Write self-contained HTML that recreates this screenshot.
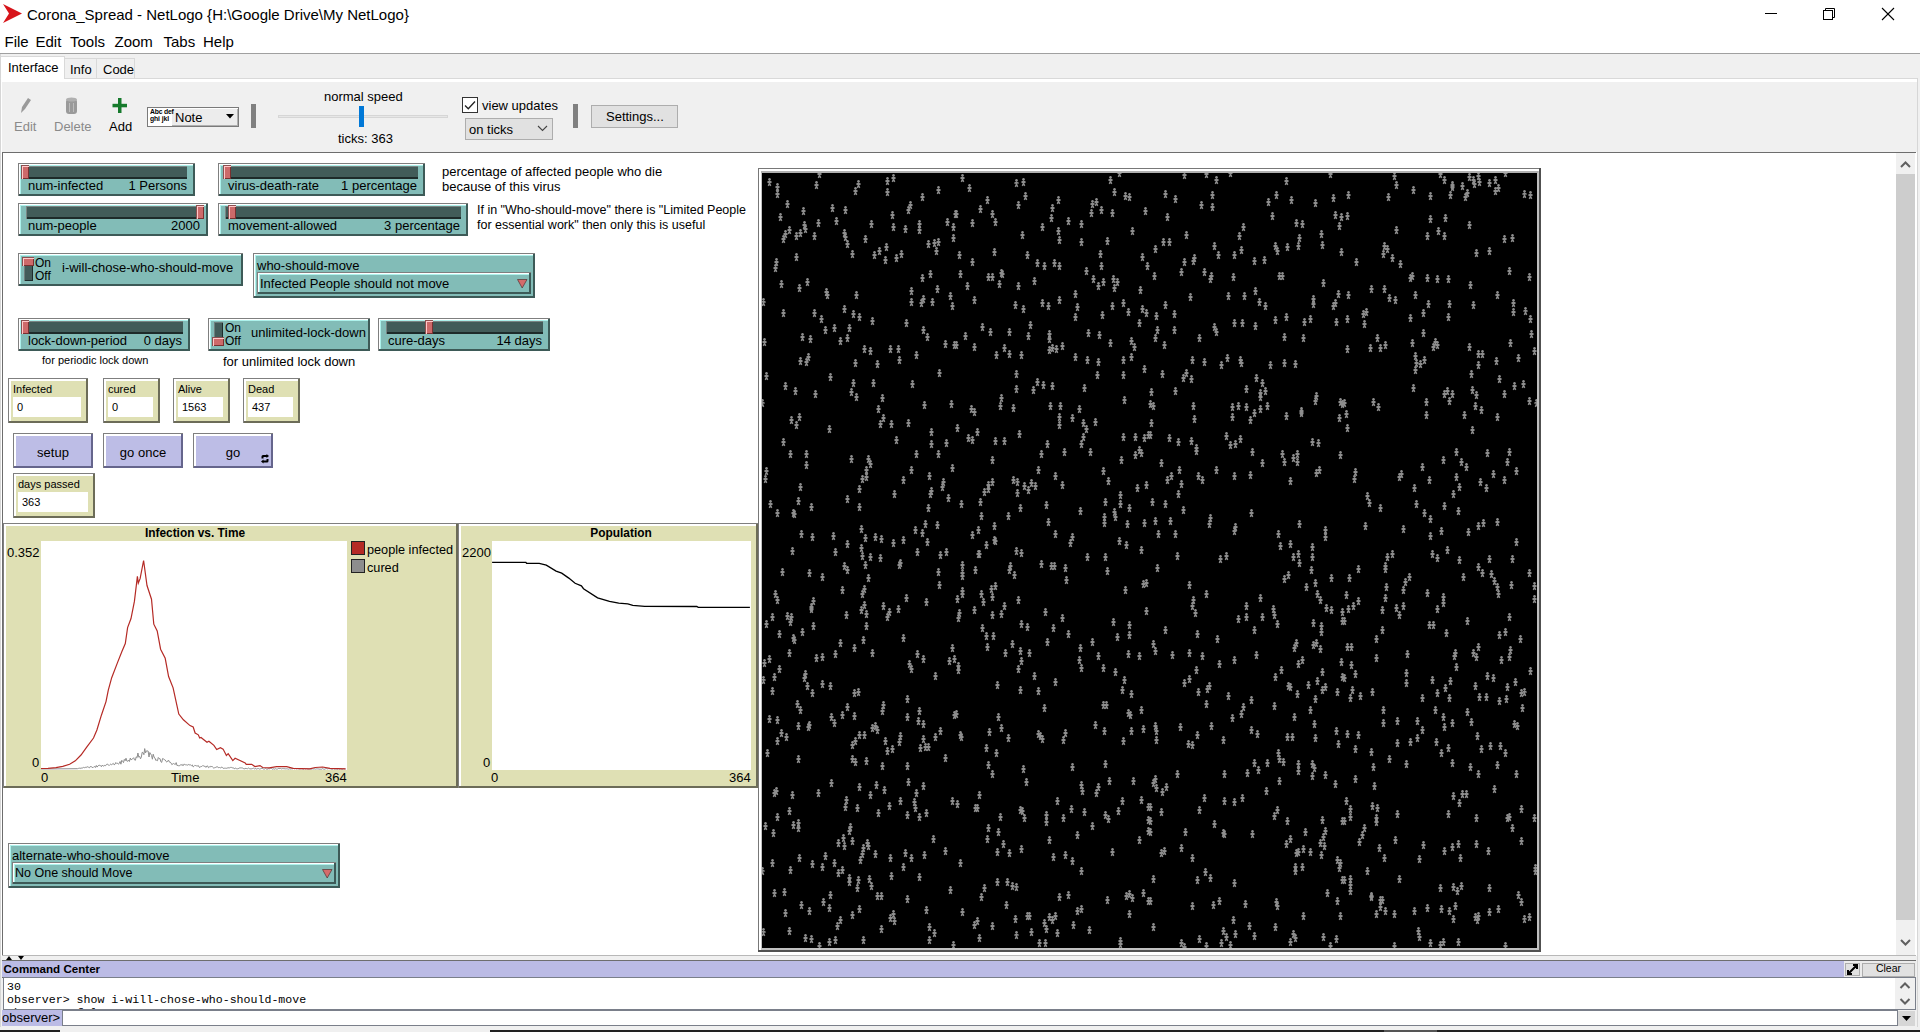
<!DOCTYPE html><html><head><meta charset="utf-8"><title>NetLogo</title><style>
*{margin:0;padding:0}
html,body{width:1920px;height:1032px;overflow:hidden;background:#fff;position:relative;font-family:'Liberation Sans',sans-serif}
.t{position:absolute;white-space:pre;line-height:1;}
</style></head><body><svg style="position:absolute;left:0;top:0" width="30" height="28"><polygon points="3,4 22,13.5 3,23 9,13.5" fill="#d7141a"/></svg><div class="t" style="left:27px;top:7.3px;font-size:15px;color:#000;font-weight:400;font-family:'Liberation Sans',sans-serif;">Corona_Spread - NetLogo {H:\Google Drive\My NetLogo}</div><svg style="position:absolute;left:1750px;top:0" width="170" height="30"><line x1="15" y1="13.5" x2="27" y2="13.5" stroke="#000" stroke-width="1"/><rect x="73.5" y="10.5" width="9" height="9" fill="none" stroke="#000" stroke-width="1"/><path d="M75.5 10.5 V8.5 H84.5 V17.5 H82.5" fill="none" stroke="#000" stroke-width="1"/><line x1="132" y1="8" x2="144" y2="20" stroke="#000" stroke-width="1.1"/><line x1="144" y1="8" x2="132" y2="20" stroke="#000" stroke-width="1.1"/></svg><div class="t" style="left:4.5px;top:34.3px;font-size:15px;color:#000;font-weight:400;font-family:'Liberation Sans',sans-serif;">File</div><div class="t" style="left:35.5px;top:34.3px;font-size:15px;color:#000;font-weight:400;font-family:'Liberation Sans',sans-serif;">Edit</div><div class="t" style="left:70px;top:34.3px;font-size:15px;color:#000;font-weight:400;font-family:'Liberation Sans',sans-serif;">Tools</div><div class="t" style="left:114.5px;top:34.3px;font-size:15px;color:#000;font-weight:400;font-family:'Liberation Sans',sans-serif;">Zoom</div><div class="t" style="left:163.5px;top:34.3px;font-size:15px;color:#000;font-weight:400;font-family:'Liberation Sans',sans-serif;">Tabs</div><div class="t" style="left:203px;top:34.3px;font-size:15px;color:#000;font-weight:400;font-family:'Liberation Sans',sans-serif;">Help</div><div style="position:absolute;left:0px;top:53px;width:1920px;height:1px;box-sizing:border-box;background:#a0a0a0"></div><div style="position:absolute;left:0px;top:54px;width:1920px;height:24px;box-sizing:border-box;background:#f0f0f0"></div><div style="position:absolute;left:0px;top:78px;width:1920px;height:954px;box-sizing:border-box;background:#fff"></div><div style="position:absolute;left:0px;top:54px;width:1px;height:978px;box-sizing:border-box;background:#d6d6d6"></div><div style="position:absolute;left:1px;top:56px;width:64px;height:23px;box-sizing:border-box;background:#fff;border:1px solid #d9d9d9;border-bottom:none"></div><div style="position:absolute;left:64px;top:58px;width:33px;height:21px;box-sizing:border-box;background:#f0f0f0;border:1px solid #d9d9d9"></div><div style="position:absolute;left:96px;top:58px;width:39px;height:21px;box-sizing:border-box;background:#f0f0f0;border:1px solid #d9d9d9"></div><div style="position:absolute;left:0px;top:78px;width:1920px;height:1px;box-sizing:border-box;background:#d9d9d9"></div><div style="position:absolute;left:1px;top:57px;width:63px;height:23px;box-sizing:border-box;background:#fff"></div><div class="t" style="left:8px;top:61.0px;font-size:13px;color:#000;font-weight:400;font-family:'Liberation Sans',sans-serif;">Interface</div><div class="t" style="left:70px;top:63.0px;font-size:13px;color:#000;font-weight:400;font-family:'Liberation Sans',sans-serif;">Info</div><div class="t" style="left:103px;top:63.0px;font-size:13px;color:#000;font-weight:400;font-family:'Liberation Sans',sans-serif;">Code</div><div style="position:absolute;left:2px;top:82px;width:1916px;height:70px;box-sizing:border-box;background:#f0f0f0"></div><div style="position:absolute;left:1917px;top:54px;width:3px;height:978px;box-sizing:border-box;background:#f0f0f0"></div><svg style="position:absolute;left:18px;top:96px" width="16" height="20"><path d="M3 17 L4 11 L10 2 L13 4 L7 13 Z" fill="#9a9a9a"/></svg><div class="t" style="left:14px;top:120.0px;font-size:13px;color:#8a8a8a;font-weight:400;font-family:'Liberation Sans',sans-serif;">Edit</div><svg style="position:absolute;left:64px;top:96px" width="16" height="20"><rect x="2" y="3" width="11" height="15" rx="3" fill="#9a9a9a"/><ellipse cx="7.5" cy="3.5" rx="5.5" ry="2" fill="#b0b0b0"/><line x1="5.5" y1="7" x2="5.5" y2="16" stroke="#bcbcbc"/><line x1="9.5" y1="7" x2="9.5" y2="16" stroke="#bcbcbc"/></svg><div class="t" style="left:54px;top:120.0px;font-size:13px;color:#8a8a8a;font-weight:400;font-family:'Liberation Sans',sans-serif;">Delete</div><svg style="position:absolute;left:112px;top:97px" width="16" height="18"><rect x="6" y="1" width="3.5" height="15" fill="#167a2c"/><rect x="0.5" y="6.8" width="14.5" height="3.5" fill="#167a2c"/></svg><div class="t" style="left:109px;top:120.0px;font-size:13px;color:#000;font-weight:400;font-family:'Liberation Sans',sans-serif;">Add</div><div style="position:absolute;left:147px;top:107px;width:92px;height:20px;box-sizing:border-box;background:#ececec;border:1px solid #7a7a7a;box-shadow:inset 1px 1px 0 #fff, inset -1px -1px 0 #b0b0b0"></div><div style="position:absolute;left:148px;top:108px;width:24px;height:18px;box-sizing:border-box;background:#fff"></div><div class="t" style="left:150px;top:108.7px;font-size:6.8px;color:#000;font-weight:700;font-family:'Liberation Sans',sans-serif;letter-spacing:-0.2px">Abc def</div><div class="t" style="left:150px;top:115.7px;font-size:6.8px;color:#000;font-weight:700;font-family:'Liberation Sans',sans-serif;letter-spacing:-0.1px">ghi jkl</div><div class="t" style="left:175px;top:111.0px;font-size:13px;color:#000;font-weight:400;font-family:'Liberation Sans',sans-serif;">Note</div><svg style="position:absolute;left:226px;top:114px" width="10" height="6"><polygon points="0,0 8,0 4,4.5" fill="#000"/></svg><div style="position:absolute;left:251px;top:104px;width:5px;height:24px;box-sizing:border-box;background:#808080"></div><div style="position:absolute;left:573px;top:104px;width:5px;height:24px;box-sizing:border-box;background:#808080"></div><div class="t" style="left:324px;top:90.0px;font-size:13px;color:#000;font-weight:400;font-family:'Liberation Sans',sans-serif;">normal speed</div><div style="position:absolute;left:278px;top:115px;width:170px;height:3px;box-sizing:border-box;background:#e7e7e7;border:1px solid #d6d6d6"></div><div style="position:absolute;left:359px;top:106px;width:5px;height:21px;box-sizing:border-box;background:#0078d7"></div><div class="t" style="left:338px;top:132.0px;font-size:13px;color:#000;font-weight:400;font-family:'Liberation Sans',sans-serif;">ticks: 363</div><div style="position:absolute;left:462px;top:97px;width:16px;height:16px;box-sizing:border-box;background:#fff;border:1px solid #333"></div><svg style="position:absolute;left:462px;top:97px" width="16" height="16"><path d="M3 8.5 L6.3 11.8 L13 4.5" fill="none" stroke="#222" stroke-width="1.3"/></svg><div class="t" style="left:482px;top:99.0px;font-size:13px;color:#000;font-weight:400;font-family:'Liberation Sans',sans-serif;">view updates</div><div style="position:absolute;left:465px;top:118px;width:88px;height:22px;box-sizing:border-box;background:#e1e1e1;border:1px solid #adadad"></div><div class="t" style="left:469px;top:123.0px;font-size:13px;color:#000;font-weight:400;font-family:'Liberation Sans',sans-serif;">on ticks</div><svg style="position:absolute;left:537px;top:125px" width="12" height="8"><path d="M1 1 L5.5 5.5 L10 1" fill="none" stroke="#444" stroke-width="1.1"/></svg><div style="position:absolute;left:591px;top:105px;width:87px;height:23px;box-sizing:border-box;background:#e1e1e1;border:1px solid #adadad"></div><div class="t" style="left:606px;top:110.0px;font-size:13px;color:#000;font-weight:400;font-family:'Liberation Sans',sans-serif;">Settings...</div><div style="position:absolute;left:2px;top:152px;width:1914px;height:1px;box-sizing:border-box;background:#6d6d6d"></div><div style="position:absolute;left:2px;top:152px;width:1px;height:804px;box-sizing:border-box;background:#6d6d6d"></div><div style="position:absolute;left:2px;top:955px;width:1914px;height:1px;box-sizing:border-box;background:#b8b8b8"></div><div style="position:absolute;left:1917px;top:78px;width:1px;height:950px;box-sizing:border-box;background:#d6d6d6"></div><div style="position:absolute;left:18px;top:163px;width:177px;height:33px;box-sizing:border-box;background:#82bcb7;border-top:1px solid #7f7f7f;border-left:1px solid #7f7f7f;box-shadow:inset -2px -2px 0 #3d5a57, inset 1px 1px 0 #fff, inset 2px 2px 0 #aef2ec"></div><div style="position:absolute;left:21px;top:166px;width:166px;height:13px;box-sizing:border-box;background:#425c59;border-top:1px solid #7a8583;border-left:1px solid #7a8583;box-shadow:inset 0 -2px 0 #1e2b2a"></div><div style="position:absolute;left:21px;top:165px;width:8px;height:14px;box-sizing:border-box;background:#cd6a6a;border-top:1px solid #8a5050;border-left:1px solid #8a5050;box-shadow:inset 1px 1px 0 #ffc8c8, inset -1px -1px 0 #7a3030"></div><div class="t" style="left:28px;top:179.0px;font-size:13px;color:#000;font-weight:400;font-family:'Liberation Sans',sans-serif;">num-infected</div><div class="t" style="left:18px;width:169px;top:179.0px;font-size:13px;text-align:right">1 Persons</div><div style="position:absolute;left:218px;top:163px;width:207px;height:33px;box-sizing:border-box;background:#82bcb7;border-top:1px solid #7f7f7f;border-left:1px solid #7f7f7f;box-shadow:inset -2px -2px 0 #3d5a57, inset 1px 1px 0 #fff, inset 2px 2px 0 #aef2ec"></div><div style="position:absolute;left:223px;top:166px;width:195px;height:13px;box-sizing:border-box;background:#425c59;border-top:1px solid #7a8583;border-left:1px solid #7a8583;box-shadow:inset 0 -2px 0 #1e2b2a"></div><div style="position:absolute;left:223px;top:165px;width:8px;height:14px;box-sizing:border-box;background:#cd6a6a;border-top:1px solid #8a5050;border-left:1px solid #8a5050;box-shadow:inset 1px 1px 0 #ffc8c8, inset -1px -1px 0 #7a3030"></div><div class="t" style="left:228px;top:179.0px;font-size:13px;color:#000;font-weight:400;font-family:'Liberation Sans',sans-serif;">virus-death-rate</div><div class="t" style="left:218px;width:199px;top:179.0px;font-size:13px;text-align:right">1 percentage</div><div style="position:absolute;left:18px;top:203px;width:190px;height:33px;box-sizing:border-box;background:#82bcb7;border-top:1px solid #7f7f7f;border-left:1px solid #7f7f7f;box-shadow:inset -2px -2px 0 #3d5a57, inset 1px 1px 0 #fff, inset 2px 2px 0 #aef2ec"></div><div style="position:absolute;left:26px;top:206px;width:178px;height:13px;box-sizing:border-box;background:#425c59;border-top:1px solid #7a8583;border-left:1px solid #7a8583;box-shadow:inset 0 -2px 0 #1e2b2a"></div><div style="position:absolute;left:196px;top:205px;width:8px;height:14px;box-sizing:border-box;background:#cd6a6a;border-top:1px solid #8a5050;border-left:1px solid #8a5050;box-shadow:inset 1px 1px 0 #ffc8c8, inset -1px -1px 0 #7a3030"></div><div class="t" style="left:28px;top:219.0px;font-size:13px;color:#000;font-weight:400;font-family:'Liberation Sans',sans-serif;">num-people</div><div class="t" style="left:18px;width:182px;top:219.0px;font-size:13px;text-align:right">2000</div><div style="position:absolute;left:218px;top:203px;width:250px;height:33px;box-sizing:border-box;background:#82bcb7;border-top:1px solid #7f7f7f;border-left:1px solid #7f7f7f;box-shadow:inset -2px -2px 0 #3d5a57, inset 1px 1px 0 #fff, inset 2px 2px 0 #aef2ec"></div><div style="position:absolute;left:225px;top:206px;width:236px;height:13px;box-sizing:border-box;background:#425c59;border-top:1px solid #7a8583;border-left:1px solid #7a8583;box-shadow:inset 0 -2px 0 #1e2b2a"></div><div style="position:absolute;left:228px;top:205px;width:8px;height:14px;box-sizing:border-box;background:#cd6a6a;border-top:1px solid #8a5050;border-left:1px solid #8a5050;box-shadow:inset 1px 1px 0 #ffc8c8, inset -1px -1px 0 #7a3030"></div><div class="t" style="left:228px;top:219.0px;font-size:13px;color:#000;font-weight:400;font-family:'Liberation Sans',sans-serif;">movement-allowed</div><div class="t" style="left:218px;width:242px;top:219.0px;font-size:13px;text-align:right">3 percentage</div><div class="t" style="left:442px;top:165.0px;font-size:13px;color:#000;font-weight:400;font-family:'Liberation Sans',sans-serif;">percentage of affected people who die</div><div class="t" style="left:442px;top:180.0px;font-size:13px;color:#000;font-weight:400;font-family:'Liberation Sans',sans-serif;">because of this virus</div><div class="t" style="left:477px;top:204.4px;font-size:12.5px;color:#000;font-weight:400;font-family:'Liberation Sans',sans-serif;">If in "Who-should-move" there is "Limited People</div><div class="t" style="left:477px;top:219.4px;font-size:12.5px;color:#000;font-weight:400;font-family:'Liberation Sans',sans-serif;">for essential work" then only this is useful</div><div style="position:absolute;left:18px;top:253px;width:225px;height:33px;box-sizing:border-box;background:#82bcb7;border-top:1px solid #7f7f7f;border-left:1px solid #7f7f7f;box-shadow:inset -2px -2px 0 #3d5a57, inset 1px 1px 0 #fff, inset 2px 2px 0 #aef2ec"></div><div style="position:absolute;left:24px;top:257px;width:9px;height:24px;box-sizing:border-box;background:#425c59;border-top:1px solid #6f7f7d;border-left:1px solid #6f7f7d;box-shadow:inset -1px -1px 0 #1e2b2a"></div><div style="position:absolute;left:22px;top:257px;width:12px;height:9px;box-sizing:border-box;background:#cd6a6a;border-top:1px solid #8a5050;border-left:1px solid #8a5050;box-shadow:inset 1px 1px 0 #ffc8c8, inset -1px -1px 0 #7a3030"></div><div class="t" style="left:35px;top:256.8px;font-size:12px;color:#000;font-weight:400;font-family:'Liberation Sans',sans-serif;">On</div><div class="t" style="left:35px;top:269.6px;font-size:12px;color:#000;font-weight:400;font-family:'Liberation Sans',sans-serif;">Off</div><div class="t" style="left:62px;top:261.0px;font-size:13px;color:#000;font-weight:400;font-family:'Liberation Sans',sans-serif;">i-will-chose-who-should-move</div><div style="position:absolute;left:253px;top:253px;width:282px;height:45px;box-sizing:border-box;background:#82bcb7;border-top:1px solid #7f7f7f;border-left:1px solid #7f7f7f;box-shadow:inset -2px -2px 0 #3d5a57, inset 1px 1px 0 #fff, inset 2px 2px 0 #aef2ec"></div><div class="t" style="left:257px;top:259.0px;font-size:13px;color:#000;font-weight:400;font-family:'Liberation Sans',sans-serif;">who-should-move</div><div style="position:absolute;left:257px;top:272px;width:274px;height:22px;box-sizing:border-box;background:#82bcb7;border-top:1px solid #7f7f7f;border-left:1px solid #7f7f7f;box-shadow:inset -2px -2px 0 #3d5a57, inset 1px 1px 0 #fff, inset 2px 2px 0 #aef2ec"></div><div class="t" style="left:260px;top:277.0px;font-size:13px;color:#000;font-weight:400;font-family:'Liberation Sans',sans-serif;">Infected People should not move</div><svg style="position:absolute;left:517px;top:279px" width="11" height="10"><polygon points="0.5,0.5 10,0.5 5.2,9" fill="#d46b6b" stroke="#503030" stroke-width="0.7"/></svg><div style="position:absolute;left:18px;top:318px;width:172px;height:33px;box-sizing:border-box;background:#82bcb7;border-top:1px solid #7f7f7f;border-left:1px solid #7f7f7f;box-shadow:inset -2px -2px 0 #3d5a57, inset 1px 1px 0 #fff, inset 2px 2px 0 #aef2ec"></div><div style="position:absolute;left:21px;top:321px;width:162px;height:13px;box-sizing:border-box;background:#425c59;border-top:1px solid #7a8583;border-left:1px solid #7a8583;box-shadow:inset 0 -2px 0 #1e2b2a"></div><div style="position:absolute;left:21px;top:320px;width:8px;height:14px;box-sizing:border-box;background:#cd6a6a;border-top:1px solid #8a5050;border-left:1px solid #8a5050;box-shadow:inset 1px 1px 0 #ffc8c8, inset -1px -1px 0 #7a3030"></div><div class="t" style="left:28px;top:334.0px;font-size:13px;color:#000;font-weight:400;font-family:'Liberation Sans',sans-serif;">lock-down-period</div><div class="t" style="left:18px;width:164px;top:334.0px;font-size:13px;text-align:right">0 days</div><div style="position:absolute;left:208px;top:318px;width:162px;height:33px;box-sizing:border-box;background:#82bcb7;border-top:1px solid #7f7f7f;border-left:1px solid #7f7f7f;box-shadow:inset -2px -2px 0 #3d5a57, inset 1px 1px 0 #fff, inset 2px 2px 0 #aef2ec"></div><div style="position:absolute;left:214px;top:322px;width:9px;height:24px;box-sizing:border-box;background:#425c59;border-top:1px solid #6f7f7d;border-left:1px solid #6f7f7d;box-shadow:inset -1px -1px 0 #1e2b2a"></div><div style="position:absolute;left:212px;top:337px;width:12px;height:9px;box-sizing:border-box;background:#cd6a6a;border-top:1px solid #8a5050;border-left:1px solid #8a5050;box-shadow:inset 1px 1px 0 #ffc8c8, inset -1px -1px 0 #7a3030"></div><div class="t" style="left:225px;top:321.8px;font-size:12px;color:#000;font-weight:400;font-family:'Liberation Sans',sans-serif;">On</div><div class="t" style="left:225px;top:334.6px;font-size:12px;color:#000;font-weight:400;font-family:'Liberation Sans',sans-serif;">Off</div><div class="t" style="left:251px;top:326.0px;font-size:13px;color:#000;font-weight:400;font-family:'Liberation Sans',sans-serif;">unlimited-lock-down</div><div style="position:absolute;left:378px;top:318px;width:172px;height:33px;box-sizing:border-box;background:#82bcb7;border-top:1px solid #7f7f7f;border-left:1px solid #7f7f7f;box-shadow:inset -2px -2px 0 #3d5a57, inset 1px 1px 0 #fff, inset 2px 2px 0 #aef2ec"></div><div style="position:absolute;left:386px;top:321px;width:157px;height:13px;box-sizing:border-box;background:#425c59;border-top:1px solid #7a8583;border-left:1px solid #7a8583;box-shadow:inset 0 -2px 0 #1e2b2a"></div><div style="position:absolute;left:425px;top:320px;width:8px;height:14px;box-sizing:border-box;background:#cd6a6a;border-top:1px solid #8a5050;border-left:1px solid #8a5050;box-shadow:inset 1px 1px 0 #ffc8c8, inset -1px -1px 0 #7a3030"></div><div class="t" style="left:388px;top:334.0px;font-size:13px;color:#000;font-weight:400;font-family:'Liberation Sans',sans-serif;">cure-days</div><div class="t" style="left:378px;width:164px;top:334.0px;font-size:13px;text-align:right">14 days</div><div class="t" style="left:42px;top:354.7px;font-size:11px;color:#000;font-weight:400;font-family:'Liberation Sans',sans-serif;">for periodic lock down</div><div class="t" style="left:223px;top:355.0px;font-size:13px;color:#000;font-weight:400;font-family:'Liberation Sans',sans-serif;">for unlimited lock down</div><div style="position:absolute;left:8px;top:378px;width:80px;height:45px;box-sizing:border-box;background:#dfe0b4;border-top:1px solid #7f7f7f;border-left:1px solid #7f7f7f;box-shadow:inset -2px -2px 0 #6c6c58, inset 2px 2px 0 #fff"></div><div class="t" style="left:13px;top:383.7px;font-size:11px;color:#000;font-weight:400;font-family:'Liberation Sans',sans-serif;">Infected</div><div style="position:absolute;left:13px;top:397px;width:68px;height:20px;box-sizing:border-box;background:#fff"></div><div class="t" style="left:17px;top:401.9px;font-size:11px;color:#000;font-weight:400;font-family:'Liberation Sans',sans-serif;">0</div><div style="position:absolute;left:103px;top:378px;width:57px;height:45px;box-sizing:border-box;background:#dfe0b4;border-top:1px solid #7f7f7f;border-left:1px solid #7f7f7f;box-shadow:inset -2px -2px 0 #6c6c58, inset 2px 2px 0 #fff"></div><div class="t" style="left:108px;top:383.7px;font-size:11px;color:#000;font-weight:400;font-family:'Liberation Sans',sans-serif;">cured</div><div style="position:absolute;left:108px;top:397px;width:45px;height:20px;box-sizing:border-box;background:#fff"></div><div class="t" style="left:112px;top:401.9px;font-size:11px;color:#000;font-weight:400;font-family:'Liberation Sans',sans-serif;">0</div><div style="position:absolute;left:173px;top:378px;width:57px;height:45px;box-sizing:border-box;background:#dfe0b4;border-top:1px solid #7f7f7f;border-left:1px solid #7f7f7f;box-shadow:inset -2px -2px 0 #6c6c58, inset 2px 2px 0 #fff"></div><div class="t" style="left:178px;top:383.7px;font-size:11px;color:#000;font-weight:400;font-family:'Liberation Sans',sans-serif;">Alive</div><div style="position:absolute;left:178px;top:397px;width:45px;height:20px;box-sizing:border-box;background:#fff"></div><div class="t" style="left:182px;top:401.9px;font-size:11px;color:#000;font-weight:400;font-family:'Liberation Sans',sans-serif;">1563</div><div style="position:absolute;left:243px;top:378px;width:57px;height:45px;box-sizing:border-box;background:#dfe0b4;border-top:1px solid #7f7f7f;border-left:1px solid #7f7f7f;box-shadow:inset -2px -2px 0 #6c6c58, inset 2px 2px 0 #fff"></div><div class="t" style="left:248px;top:383.7px;font-size:11px;color:#000;font-weight:400;font-family:'Liberation Sans',sans-serif;">Dead</div><div style="position:absolute;left:248px;top:397px;width:45px;height:20px;box-sizing:border-box;background:#fff"></div><div class="t" style="left:252px;top:401.9px;font-size:11px;color:#000;font-weight:400;font-family:'Liberation Sans',sans-serif;">437</div><div style="position:absolute;left:13px;top:433px;width:80px;height:35px;box-sizing:border-box;background:#bdbde6;border-top:1px solid #7f7f7f;border-left:1px solid #7f7f7f;box-shadow:inset -2px -2px 0 #65658c, inset 2px 2px 0 #fff"></div><div class="t" style="left:13px;width:80px;top:446.0px;font-size:13px;text-align:center">setup</div><div style="position:absolute;left:103px;top:433px;width:80px;height:35px;box-sizing:border-box;background:#bdbde6;border-top:1px solid #7f7f7f;border-left:1px solid #7f7f7f;box-shadow:inset -2px -2px 0 #65658c, inset 2px 2px 0 #fff"></div><div class="t" style="left:103px;width:80px;top:446.0px;font-size:13px;text-align:center">go once</div><div style="position:absolute;left:193px;top:433px;width:80px;height:35px;box-sizing:border-box;background:#bdbde6;border-top:1px solid #7f7f7f;border-left:1px solid #7f7f7f;box-shadow:inset -2px -2px 0 #65658c, inset 2px 2px 0 #fff"></div><div class="t" style="left:193px;width:80px;top:446.0px;font-size:13px;text-align:center">go</div><svg style="position:absolute;left:260px;top:454px" width="10" height="10"><path d="M1.5 4.5 V2.5 Q1.5 1 3 1 H6.5 V0 L9 2 L6.5 4 V3 H3.5 V4.5 Z M8.5 5 V7 Q8.5 8.5 7 8.5 H3.5 V9.5 L1 7.5 L3.5 5.5 V6.5 H6.5 V5 Z" fill="#000"/></svg><div style="position:absolute;left:13px;top:473px;width:82px;height:45px;box-sizing:border-box;background:#dfe0b4;border-top:1px solid #7f7f7f;border-left:1px solid #7f7f7f;box-shadow:inset -2px -2px 0 #6c6c58, inset 2px 2px 0 #fff"></div><div class="t" style="left:18px;top:478.7px;font-size:11px;color:#000;font-weight:400;font-family:'Liberation Sans',sans-serif;">days passed</div><div style="position:absolute;left:18px;top:492px;width:70px;height:20px;box-sizing:border-box;background:#fff"></div><div class="t" style="left:22px;top:496.9px;font-size:11px;color:#000;font-weight:400;font-family:'Liberation Sans',sans-serif;">363</div><div style="position:absolute;left:8px;top:843px;width:332px;height:45px;box-sizing:border-box;background:#82bcb7;border-top:1px solid #7f7f7f;border-left:1px solid #7f7f7f;box-shadow:inset -2px -2px 0 #3d5a57, inset 1px 1px 0 #fff, inset 2px 2px 0 #aef2ec"></div><div class="t" style="left:12px;top:849.0px;font-size:13px;color:#000;font-weight:400;font-family:'Liberation Sans',sans-serif;">alternate-who-should-move</div><div style="position:absolute;left:12px;top:862px;width:324px;height:22px;box-sizing:border-box;background:#82bcb7;border-top:1px solid #7f7f7f;border-left:1px solid #7f7f7f;box-shadow:inset -2px -2px 0 #3d5a57, inset 1px 1px 0 #fff, inset 2px 2px 0 #aef2ec"></div><div class="t" style="left:15px;top:867.4px;font-size:12.5px;color:#000;font-weight:400;font-family:'Liberation Sans',sans-serif;">No One should Move</div><svg style="position:absolute;left:322px;top:869px" width="11" height="10"><polygon points="0.5,0.5 10,0.5 5.2,9" fill="#d46b6b" stroke="#503030" stroke-width="0.7"/></svg><div style="position:absolute;left:3px;top:523px;width:455px;height:265px;box-sizing:border-box;background:#dfe0b4;border-top:1px solid #7f7f7f;border-left:1px solid #7f7f7f;box-shadow:inset -2px -2px 0 #6c6c58, inset 2px 2px 0 #fff"></div><div class="t" style="left:95px;width:200px;top:528.1px;font-size:11.9px;font-weight:700;text-align:center">Infection vs. Time</div><div style="position:absolute;left:41px;top:541px;width:306px;height:229px;box-sizing:border-box;background:#fff"></div><div style="position:absolute;left:458px;top:523px;width:300px;height:265px;box-sizing:border-box;background:#dfe0b4;border-top:1px solid #7f7f7f;border-left:1px solid #7f7f7f;box-shadow:inset -2px -2px 0 #6c6c58, inset 2px 2px 0 #fff"></div><div class="t" style="left:521px;width:200px;top:528.1px;font-size:11.9px;font-weight:700;text-align:center">Population</div><div style="position:absolute;left:492px;top:541px;width:259px;height:229px;box-sizing:border-box;background:#fff"></div><svg style="position:absolute;left:0;top:0" width="760" height="790"><polyline points="41.0,769.0 77.6,768.7 78.4,768.4 79.3,768.1 80.1,768.6 81.0,767.8 81.8,768.2 82.7,767.9 83.5,767.4 84.4,767.9 85.2,767.1 86.1,767.6 86.9,766.9 87.8,766.8 88.6,767.3 89.5,767.8 90.3,766.5 91.2,766.6 92.0,767.2 92.9,767.7 93.7,766.9 94.6,766.5 95.4,767.5 96.3,765.5 97.1,767.1 98.0,765.8 98.8,765.4 99.7,765.3 100.5,765.6 101.4,766.7 102.2,765.1 103.1,766.0 103.9,766.1 104.8,765.3 105.6,765.7 106.5,764.4 107.3,764.2 108.2,764.5 109.0,765.6 109.9,764.7 110.7,764.1 111.6,764.7 112.4,764.1 113.3,763.4 114.1,764.8 115.0,764.3 115.8,762.5 116.7,763.5 117.5,763.1 118.4,764.2 119.2,763.5 120.1,761.5 120.9,764.2 121.8,760.3 122.6,761.3 123.5,762.6 124.3,759.4 125.2,760.7 126.0,758.2 126.9,761.1 127.7,761.3 128.6,760.1 129.4,761.5 130.3,758.0 131.1,759.9 132.0,759.1 132.8,758.7 133.7,757.7 134.5,759.9 135.4,760.3 136.2,756.8 137.1,757.7 137.9,753.0 138.8,757.2 139.6,756.4 140.5,758.8 141.3,757.1 142.2,752.3 143.0,752.6 143.9,754.7 144.7,748.6 145.6,752.9 146.4,750.9 147.3,750.9 148.1,751.0 149.0,757.0 149.8,752.5 150.7,753.9 151.5,755.4 152.4,759.2 153.2,754.2 154.1,757.1 154.9,758.0 155.8,760.4 156.6,760.2 157.5,760.7 158.3,757.5 159.2,758.6 160.0,758.6 160.9,761.8 161.7,762.4 162.6,758.5 163.4,758.9 164.3,759.5 165.1,759.9 166.0,761.4 166.8,762.1 167.7,761.0 168.5,760.1 169.4,762.1 170.2,762.1 171.1,763.1 171.9,764.7 172.8,763.9 173.6,763.5 174.5,764.1 175.3,764.5 176.2,762.6 177.0,765.6 177.9,765.4 178.7,765.8 179.6,765.8 180.4,764.8 181.3,765.0 182.1,764.3 183.0,765.8 183.8,764.3 184.7,764.4 185.5,764.8 186.4,764.8 187.2,765.3 188.1,764.6 188.9,764.6 189.8,765.0 190.6,764.9 191.5,765.6 192.3,764.9 193.2,766.9 194.0,766.3 194.9,765.3 195.7,765.6 196.6,765.9 197.4,766.0 198.3,765.5 199.1,767.1 200.0,767.5 200.8,766.4 201.7,766.5 202.5,765.7 203.4,765.8 204.2,766.3 205.1,766.2 205.9,767.4 206.8,766.1 207.6,765.9 208.5,767.7 209.3,767.0 210.2,766.3 211.0,767.1 211.9,766.2 212.7,767.2 213.6,768.0 214.4,767.8 215.3,767.6 216.1,766.9 217.0,767.1 217.8,766.8 218.7,767.8 219.5,767.5 220.4,767.9 221.2,767.3 222.1,767.2 222.9,768.1 223.8,768.4 224.6,768.2 225.5,768.2 226.3,768.3 227.2,768.2 228.0,767.5 228.9,768.0 229.7,767.8 230.6,767.4 231.4,767.4 232.3,767.8 233.1,767.8 234.0,768.3 234.8,768.7 235.7,768.1 236.5,768.7 237.4,768.8 238.2,768.7 239.1,768.1 239.9,767.9 240.8,767.9 241.6,767.9 242.5,768.0 243.3,768.5 244.2,768.8 245.0,768.7 245.9,768.3 246.7,768.6 247.6,768.7 248.4,768.0 249.3,768.6 250.1,768.9 251.0,768.8 251.8,768.8 252.7,768.5 253.5,768.2 254.4,768.9 255.2,768.4 256.1,768.9 256.9,769.1 257.8,768.5 258.6,768.6 259.5,769.1 260.3,768.9 261.2,768.4 262.0,768.4 262.9,768.4 263.7,769.1 264.6,769.0 265.4,768.4 266.3,769.0 267.1,769.2 268.0,768.9 268.8,768.6 269.7,768.8 270.5,768.4 271.4,768.3 272.2,769.2 273.1,768.9 273.9,768.8 274.8,769.2 275.6,768.7 276.5,769.1 277.3,769.1 278.2,768.5 279.0,768.5 279.9,768.6 280.7,768.5 281.6,768.9 282.4,768.6 283.3,768.7 284.1,768.4 285.0,769.2 285.8,768.7 286.7,768.8 287.5,768.9 288.4,769.2 289.2,768.7 290.1,769.2 290.9,768.8 291.8,768.8 292.6,768.8 293.5,768.4 294.3,768.8 295.2,768.5 296.0,768.4 296.9,769.1 297.7,768.5 298.6,768.8 299.4,769.0 300.3,768.9 301.2,768.7 302.0,768.9 302.9,768.9 303.7,769.1 304.6,768.5 305.4,768.9 306.3,768.6 307.1,768.7 308.0,769.1 308.8,768.9 309.7,768.9 310.5,769.1 311.4,769.2 312.2,768.8 313.1,769.0 313.9,768.9 314.8,768.9 315.6,769.1 316.5,768.9 317.3,768.9 318.2,768.9 319.0,769.2 319.9,769.1 320.7,769.2 321.6,769.2 322.4,768.7 323.3,769.0 324.1,769.2 325.0,769.2 325.8,768.6 326.7,768.6 327.5,768.9 328.4,768.6 329.2,768.7 330.1,768.6 330.9,769.1 331.8,769.2 332.6,769.2 333.5,768.7 334.3,769.1 335.2,769.1 336.0,768.7 336.9,769.2 337.7,769.2 338.6,768.7 339.4,769.2 340.3,768.9 341.1,769.0 342.0,769.2 342.8,769.2 343.7,768.7 344.5,768.9 345.4,769.0" fill="none" stroke="#8d8d8d" stroke-width="1"/><polyline points="41.0,768.5 48.0,768.3 55.9,767.6 62.8,766.4 69.6,764.2 75.3,760.8 81.0,755.0 86.7,747.1 93.5,738.0 96.9,730.0 101.4,715.2 106.0,701.6 108.3,690.2 111.7,677.7 117.4,662.9 121.9,651.5 125.3,643.5 127.6,627.6 131.0,618.5 134.4,601.4 137.4,576.4 138.3,583.2 140.1,578.7 143.6,560.5 147.0,585.5 151.5,599.2 153.8,624.2 157.2,631.0 160.6,649.2 165.2,658.3 168.6,676.5 173.1,687.9 178.8,714.1 183.4,719.8 190.0,725.6 193.2,727.0 195.1,733.0 198.3,734.8 199.7,738.0 201.0,737.5 207.0,742.2 208.9,741.2 213.9,745.4 216.7,749.5 220.4,747.7 223.1,749.1 226.4,755.5 228.2,753.7 232.8,760.6 235.1,758.3 245.2,762.9 246.2,764.3 251.7,764.3 254.9,766.6 260.0,765.6 262.7,767.5 269.2,767.9 276.6,766.6 286.7,766.6 293.1,768.4 309.7,768.9 315.2,767.5 322.6,767.0 330.0,768.4 345.6,768.9" fill="none" stroke="#b52a25" stroke-width="1.2"/><polyline points="492.1,562.4 525.9,562.4 526.6,563.4 539.2,563.4 546.3,565.2 556.1,571.1 561.7,573.2 568.8,578.1 575.1,583.3 581.4,585.9 583.5,588.7 597.6,597.8 609.5,601.3 618.7,603.2 627.8,603.9 632.8,605.3 644.7,606.3 696.8,606.5 698.2,607.4 749.9,607.4" fill="none" stroke="#000" stroke-width="1.3"/></svg><div style="position:absolute;left:351px;top:541px;width:14px;height:14px;box-sizing:border-box;background:#b52a25;border:1px solid #222"></div><div class="t" style="left:367px;top:544.2px;font-size:12.7px;color:#000;font-weight:400;font-family:'Liberation Sans',sans-serif;">people infected</div><div style="position:absolute;left:351px;top:559px;width:14px;height:14px;box-sizing:border-box;background:#8d8d8d;border:1px solid #222"></div><div class="t" style="left:367px;top:562.2px;font-size:12.7px;color:#000;font-weight:400;font-family:'Liberation Sans',sans-serif;">cured</div><div class="t" style="left:7px;top:546.0px;font-size:13px;color:#000;font-weight:400;font-family:'Liberation Sans',sans-serif;">0.352</div><div class="t" style="left:32px;top:756.0px;font-size:13px;color:#000;font-weight:400;font-family:'Liberation Sans',sans-serif;">0</div><div class="t" style="left:41px;top:771.0px;font-size:13px;color:#000;font-weight:400;font-family:'Liberation Sans',sans-serif;">0</div><div class="t" style="left:171px;top:771.0px;font-size:13px;color:#000;font-weight:400;font-family:'Liberation Sans',sans-serif;">Time</div><div class="t" style="left:325px;top:771.0px;font-size:13px;color:#000;font-weight:400;font-family:'Liberation Sans',sans-serif;">364</div><div class="t" style="left:462px;top:546.0px;font-size:13px;color:#000;font-weight:400;font-family:'Liberation Sans',sans-serif;">2200</div><div class="t" style="left:483px;top:756.0px;font-size:13px;color:#000;font-weight:400;font-family:'Liberation Sans',sans-serif;">0</div><div class="t" style="left:491px;top:771.0px;font-size:13px;color:#000;font-weight:400;font-family:'Liberation Sans',sans-serif;">0</div><div class="t" style="left:729px;top:771.0px;font-size:13px;color:#000;font-weight:400;font-family:'Liberation Sans',sans-serif;">364</div><div style="position:absolute;left:758px;top:168px;width:783px;height:784px;box-sizing:border-box;background:#505050"></div><div style="position:absolute;left:758px;top:168px;width:781px;height:782px;box-sizing:border-box;background:#c0c0c0"></div><div style="position:absolute;left:758px;top:168px;width:781px;height:1px;box-sizing:border-box;background:#787878"></div><div style="position:absolute;left:758px;top:168px;width:1px;height:782px;box-sizing:border-box;background:#787878"></div><div style="position:absolute;left:759px;top:169px;width:780px;height:2px;box-sizing:border-box;background:#fff"></div><div style="position:absolute;left:759px;top:169px;width:2px;height:781px;box-sizing:border-box;background:#fff"></div><div style="position:absolute;left:761px;top:171px;width:777px;height:2px;box-sizing:border-box;background:#b0b0b0"></div><div style="position:absolute;left:762px;top:173px;width:775px;height:775px;box-sizing:border-box;background:#000"></div><svg style="position:absolute;left:0;top:0" width="1540" height="950"><defs><clipPath id="wc"><rect x="762" y="173" width="775" height="775"/></clipPath><g id="p"><circle cx="2.5" cy="1.25" r="1.25" fill="#8e8e8e"/><path d="M2.5 2.3V5.6M0.4 4.3L2.5 3.1L4.6 4.3M1.3 7.9L2.5 5.2L3.7 7.9" stroke="#8e8e8e" stroke-width="1.4" fill="none"/></g></defs><g clip-path="url(#wc)"><use href="#p" x="817" y="170"/><use href="#p" x="767" y="178"/><use href="#p" x="775" y="183"/><use href="#p" x="775" y="190"/><use href="#p" x="814" y="181"/><use href="#p" x="856" y="180"/><use href="#p" x="853" y="187"/><use href="#p" x="885" y="177"/><use href="#p" x="891" y="174"/><use href="#p" x="885" y="188"/><use href="#p" x="936" y="186"/><use href="#p" x="920" y="193"/><use href="#p" x="785" y="200"/><use href="#p" x="801" y="207"/><use href="#p" x="778" y="213"/><use href="#p" x="830" y="204"/><use href="#p" x="843" y="206"/><use href="#p" x="834" y="217"/><use href="#p" x="908" y="201"/><use href="#p" x="906" y="206"/><use href="#p" x="890" y="211"/><use href="#p" x="869" y="220"/><use href="#p" x="891" y="223"/><use href="#p" x="903" y="225"/><use href="#p" x="917" y="220"/><use href="#p" x="917" y="226"/><use href="#p" x="945" y="218"/><use href="#p" x="951" y="223"/><use href="#p" x="951" y="234"/><use href="#p" x="953" y="210"/><use href="#p" x="787" y="226"/><use href="#p" x="783" y="230"/><use href="#p" x="781" y="235"/><use href="#p" x="794" y="232"/><use href="#p" x="798" y="229"/><use href="#p" x="802" y="221"/><use href="#p" x="803" y="225"/><use href="#p" x="816" y="219"/><use href="#p" x="812" y="232"/><use href="#p" x="842" y="229"/><use href="#p" x="843" y="233"/><use href="#p" x="845" y="240"/><use href="#p" x="863" y="235"/><use href="#p" x="850" y="250"/><use href="#p" x="872" y="251"/><use href="#p" x="877" y="247"/><use href="#p" x="884" y="243"/><use href="#p" x="883" y="256"/><use href="#p" x="894" y="254"/><use href="#p" x="899" y="250"/><use href="#p" x="926" y="240"/><use href="#p" x="932" y="239"/><use href="#p" x="936" y="238"/><use href="#p" x="934" y="247"/><use href="#p" x="794" y="253"/><use href="#p" x="774" y="258"/><use href="#p" x="773" y="264"/><use href="#p" x="779" y="280"/><use href="#p" x="797" y="284"/><use href="#p" x="805" y="278"/><use href="#p" x="824" y="288"/><use href="#p" x="825" y="291"/><use href="#p" x="854" y="291"/><use href="#p" x="761" y="298"/><use href="#p" x="781" y="309"/><use href="#p" x="812" y="309"/><use href="#p" x="819" y="315"/><use href="#p" x="823" y="326"/><use href="#p" x="832" y="324"/><use href="#p" x="842" y="305"/><use href="#p" x="851" y="310"/><use href="#p" x="857" y="313"/><use href="#p" x="847" y="324"/><use href="#p" x="870" y="317"/><use href="#p" x="838" y="337"/><use href="#p" x="845" y="334"/><use href="#p" x="800" y="333"/><use href="#p" x="808" y="335"/><use href="#p" x="762" y="338"/><use href="#p" x="798" y="357"/><use href="#p" x="804" y="358"/><use href="#p" x="806" y="353"/><use href="#p" x="862" y="345"/><use href="#p" x="868" y="347"/><use href="#p" x="888" y="345"/><use href="#p" x="896" y="345"/><use href="#p" x="897" y="356"/><use href="#p" x="914" y="351"/><use href="#p" x="904" y="319"/><use href="#p" x="921" y="326"/><use href="#p" x="925" y="333"/><use href="#p" x="943" y="340"/><use href="#p" x="952" y="341"/><use href="#p" x="920" y="274"/><use href="#p" x="928" y="270"/><use href="#p" x="909" y="287"/><use href="#p" x="935" y="285"/><use href="#p" x="909" y="298"/><use href="#p" x="919" y="299"/><use href="#p" x="921" y="295"/><use href="#p" x="930" y="298"/><use href="#p" x="948" y="292"/><use href="#p" x="950" y="302"/><use href="#p" x="853" y="359"/><use href="#p" x="875" y="360"/><use href="#p" x="960" y="174"/><use href="#p" x="967" y="184"/><use href="#p" x="1014" y="179"/><use href="#p" x="1021" y="178"/><use href="#p" x="1108" y="176"/><use href="#p" x="1117" y="169"/><use href="#p" x="1112" y="188"/><use href="#p" x="1123" y="192"/><use href="#p" x="1127" y="193"/><use href="#p" x="1023" y="192"/><use href="#p" x="985" y="196"/><use href="#p" x="1056" y="196"/><use href="#p" x="1090" y="200"/><use href="#p" x="1094" y="198"/><use href="#p" x="1099" y="206"/><use href="#p" x="978" y="205"/><use href="#p" x="1016" y="201"/><use href="#p" x="1050" y="204"/><use href="#p" x="1089" y="209"/><use href="#p" x="1110" y="209"/><use href="#p" x="1143" y="207"/><use href="#p" x="954" y="210"/><use href="#p" x="990" y="210"/><use href="#p" x="993" y="218"/><use href="#p" x="970" y="219"/><use href="#p" x="1049" y="214"/><use href="#p" x="1066" y="217"/><use href="#p" x="1079" y="220"/><use href="#p" x="1040" y="223"/><use href="#p" x="1056" y="227"/><use href="#p" x="1130" y="227"/><use href="#p" x="1020" y="231"/><use href="#p" x="1057" y="236"/><use href="#p" x="1079" y="238"/><use href="#p" x="1105" y="237"/><use href="#p" x="957" y="251"/><use href="#p" x="992" y="248"/><use href="#p" x="1025" y="251"/><use href="#p" x="1098" y="250"/><use href="#p" x="1140" y="253"/><use href="#p" x="970" y="258"/><use href="#p" x="1035" y="259"/><use href="#p" x="1042" y="262"/><use href="#p" x="1052" y="259"/><use href="#p" x="1057" y="262"/><use href="#p" x="1084" y="267"/><use href="#p" x="1099" y="262"/><use href="#p" x="1145" y="262"/><use href="#p" x="958" y="270"/><use href="#p" x="986" y="273"/><use href="#p" x="990" y="273"/><use href="#p" x="999" y="269"/><use href="#p" x="1000" y="270"/><use href="#p" x="997" y="280"/><use href="#p" x="1032" y="277"/><use href="#p" x="1091" y="275"/><use href="#p" x="1096" y="282"/><use href="#p" x="1101" y="278"/><use href="#p" x="1111" y="275"/><use href="#p" x="1115" y="278"/><use href="#p" x="1112" y="284"/><use href="#p" x="965" y="282"/><use href="#p" x="1016" y="282"/><use href="#p" x="1073" y="290"/><use href="#p" x="1138" y="286"/><use href="#p" x="972" y="296"/><use href="#p" x="1057" y="296"/><use href="#p" x="1013" y="301"/><use href="#p" x="1021" y="305"/><use href="#p" x="1040" y="299"/><use href="#p" x="1046" y="302"/><use href="#p" x="1075" y="303"/><use href="#p" x="1110" y="302"/><use href="#p" x="1121" y="299"/><use href="#p" x="1126" y="308"/><use href="#p" x="1140" y="305"/><use href="#p" x="1144" y="309"/><use href="#p" x="1073" y="313"/><use href="#p" x="1100" y="311"/><use href="#p" x="1137" y="319"/><use href="#p" x="980" y="323"/><use href="#p" x="1028" y="321"/><use href="#p" x="988" y="328"/><use href="#p" x="1007" y="328"/><use href="#p" x="963" y="332"/><use href="#p" x="1026" y="332"/><use href="#p" x="1047" y="330"/><use href="#p" x="1047" y="335"/><use href="#p" x="1086" y="329"/><use href="#p" x="1097" y="331"/><use href="#p" x="1108" y="339"/><use href="#p" x="1129" y="337"/><use href="#p" x="1132" y="343"/><use href="#p" x="954" y="341"/><use href="#p" x="972" y="343"/><use href="#p" x="1002" y="344"/><use href="#p" x="994" y="351"/><use href="#p" x="1007" y="350"/><use href="#p" x="1019" y="351"/><use href="#p" x="1047" y="346"/><use href="#p" x="1050" y="344"/><use href="#p" x="1054" y="345"/><use href="#p" x="1060" y="342"/><use href="#p" x="1073" y="353"/><use href="#p" x="1085" y="356"/><use href="#p" x="1096" y="358"/><use href="#p" x="1121" y="356"/><use href="#p" x="1129" y="353"/><use href="#p" x="1182" y="171"/><use href="#p" x="1204" y="170"/><use href="#p" x="1214" y="176"/><use href="#p" x="1228" y="169"/><use href="#p" x="1284" y="177"/><use href="#p" x="1328" y="170"/><use href="#p" x="1163" y="190"/><use href="#p" x="1173" y="195"/><use href="#p" x="1210" y="191"/><use href="#p" x="1199" y="201"/><use href="#p" x="1210" y="203"/><use href="#p" x="1274" y="191"/><use href="#p" x="1266" y="198"/><use href="#p" x="1289" y="196"/><use href="#p" x="1313" y="199"/><use href="#p" x="1331" y="194"/><use href="#p" x="1165" y="213"/><use href="#p" x="1270" y="212"/><use href="#p" x="1333" y="211"/><use href="#p" x="1339" y="213"/><use href="#p" x="1294" y="219"/><use href="#p" x="1300" y="220"/><use href="#p" x="1337" y="222"/><use href="#p" x="1241" y="223"/><use href="#p" x="1237" y="232"/><use href="#p" x="1184" y="231"/><use href="#p" x="1319" y="230"/><use href="#p" x="1297" y="234"/><use href="#p" x="1161" y="238"/><use href="#p" x="1167" y="238"/><use href="#p" x="1153" y="245"/><use href="#p" x="1212" y="242"/><use href="#p" x="1273" y="242"/><use href="#p" x="1275" y="247"/><use href="#p" x="1285" y="243"/><use href="#p" x="1296" y="242"/><use href="#p" x="1320" y="241"/><use href="#p" x="1339" y="248"/><use href="#p" x="1239" y="246"/><use href="#p" x="1232" y="251"/><use href="#p" x="1216" y="251"/><use href="#p" x="1192" y="254"/><use href="#p" x="1191" y="257"/><use href="#p" x="1182" y="258"/><use href="#p" x="1252" y="257"/><use href="#p" x="1262" y="256"/><use href="#p" x="1152" y="272"/><use href="#p" x="1179" y="268"/><use href="#p" x="1202" y="268"/><use href="#p" x="1209" y="272"/><use href="#p" x="1208" y="275"/><use href="#p" x="1231" y="273"/><use href="#p" x="1277" y="272"/><use href="#p" x="1280" y="272"/><use href="#p" x="1321" y="279"/><use href="#p" x="1336" y="290"/><use href="#p" x="1188" y="293"/><use href="#p" x="1226" y="292"/><use href="#p" x="1242" y="292"/><use href="#p" x="1253" y="287"/><use href="#p" x="1257" y="298"/><use href="#p" x="1263" y="302"/><use href="#p" x="1163" y="301"/><use href="#p" x="1311" y="295"/><use href="#p" x="1311" y="300"/><use href="#p" x="1333" y="299"/><use href="#p" x="1331" y="302"/><use href="#p" x="1154" y="312"/><use href="#p" x="1172" y="310"/><use href="#p" x="1232" y="319"/><use href="#p" x="1240" y="319"/><use href="#p" x="1253" y="322"/><use href="#p" x="1273" y="316"/><use href="#p" x="1284" y="313"/><use href="#p" x="1302" y="318"/><use href="#p" x="1308" y="315"/><use href="#p" x="1334" y="318"/><use href="#p" x="1155" y="326"/><use href="#p" x="1172" y="326"/><use href="#p" x="1212" y="323"/><use href="#p" x="1214" y="328"/><use href="#p" x="1153" y="334"/><use href="#p" x="1197" y="334"/><use href="#p" x="1162" y="341"/><use href="#p" x="1282" y="333"/><use href="#p" x="1301" y="334"/><use href="#p" x="1190" y="356"/><use href="#p" x="1202" y="358"/><use href="#p" x="1225" y="354"/><use href="#p" x="1238" y="356"/><use href="#p" x="1239" y="359"/><use href="#p" x="1219" y="361"/><use href="#p" x="1268" y="361"/><use href="#p" x="1282" y="359"/><use href="#p" x="1293" y="360"/><use href="#p" x="1392" y="172"/><use href="#p" x="1438" y="170"/><use href="#p" x="1442" y="176"/><use href="#p" x="1450" y="181"/><use href="#p" x="1450" y="183"/><use href="#p" x="1460" y="182"/><use href="#p" x="1467" y="173"/><use href="#p" x="1471" y="176"/><use href="#p" x="1472" y="180"/><use href="#p" x="1476" y="172"/><use href="#p" x="1477" y="178"/><use href="#p" x="1487" y="179"/><use href="#p" x="1493" y="176"/><use href="#p" x="1496" y="184"/><use href="#p" x="1493" y="187"/><use href="#p" x="1503" y="169"/><use href="#p" x="1394" y="181"/><use href="#p" x="1411" y="186"/><use href="#p" x="1346" y="191"/><use href="#p" x="1386" y="193"/><use href="#p" x="1428" y="192"/><use href="#p" x="1448" y="191"/><use href="#p" x="1463" y="193"/><use href="#p" x="1465" y="189"/><use href="#p" x="1522" y="190"/><use href="#p" x="1528" y="191"/><use href="#p" x="1345" y="212"/><use href="#p" x="1428" y="215"/><use href="#p" x="1443" y="214"/><use href="#p" x="1467" y="221"/><use href="#p" x="1394" y="226"/><use href="#p" x="1436" y="227"/><use href="#p" x="1425" y="232"/><use href="#p" x="1442" y="232"/><use href="#p" x="1502" y="235"/><use href="#p" x="1510" y="234"/><use href="#p" x="1382" y="242"/><use href="#p" x="1385" y="245"/><use href="#p" x="1381" y="250"/><use href="#p" x="1390" y="254"/><use href="#p" x="1398" y="260"/><use href="#p" x="1354" y="258"/><use href="#p" x="1474" y="249"/><use href="#p" x="1487" y="247"/><use href="#p" x="1507" y="267"/><use href="#p" x="1527" y="273"/><use href="#p" x="1408" y="274"/><use href="#p" x="1410" y="272"/><use href="#p" x="1425" y="274"/><use href="#p" x="1435" y="275"/><use href="#p" x="1446" y="275"/><use href="#p" x="1468" y="281"/><use href="#p" x="1369" y="285"/><use href="#p" x="1382" y="285"/><use href="#p" x="1346" y="291"/><use href="#p" x="1413" y="291"/><use href="#p" x="1387" y="294"/><use href="#p" x="1393" y="296"/><use href="#p" x="1495" y="291"/><use href="#p" x="1426" y="300"/><use href="#p" x="1447" y="300"/><use href="#p" x="1471" y="301"/><use href="#p" x="1511" y="299"/><use href="#p" x="1511" y="308"/><use href="#p" x="1523" y="307"/><use href="#p" x="1361" y="310"/><use href="#p" x="1364" y="308"/><use href="#p" x="1362" y="320"/><use href="#p" x="1345" y="315"/><use href="#p" x="1408" y="314"/><use href="#p" x="1421" y="309"/><use href="#p" x="1446" y="313"/><use href="#p" x="1528" y="315"/><use href="#p" x="1421" y="329"/><use href="#p" x="1529" y="330"/><use href="#p" x="1375" y="334"/><use href="#p" x="1410" y="339"/><use href="#p" x="1383" y="341"/><use href="#p" x="1368" y="344"/><use href="#p" x="1378" y="344"/><use href="#p" x="1345" y="345"/><use href="#p" x="1433" y="338"/><use href="#p" x="1435" y="341"/><use href="#p" x="1431" y="343"/><use href="#p" x="1467" y="343"/><use href="#p" x="1508" y="339"/><use href="#p" x="1532" y="347"/><use href="#p" x="1476" y="350"/><use href="#p" x="1480" y="350"/><use href="#p" x="1516" y="354"/><use href="#p" x="1413" y="352"/><use href="#p" x="1422" y="356"/><use href="#p" x="1414" y="359"/><use href="#p" x="1418" y="360"/><use href="#p" x="1494" y="357"/><use href="#p" x="1476" y="361"/><use href="#p" x="764" y="372"/><use href="#p" x="828" y="373"/><use href="#p" x="937" y="369"/><use href="#p" x="783" y="382"/><use href="#p" x="793" y="387"/><use href="#p" x="813" y="390"/><use href="#p" x="851" y="379"/><use href="#p" x="871" y="379"/><use href="#p" x="910" y="380"/><use href="#p" x="849" y="388"/><use href="#p" x="854" y="393"/><use href="#p" x="880" y="394"/><use href="#p" x="760" y="399"/><use href="#p" x="922" y="401"/><use href="#p" x="949" y="400"/><use href="#p" x="876" y="405"/><use href="#p" x="789" y="416"/><use href="#p" x="797" y="413"/><use href="#p" x="794" y="421"/><use href="#p" x="881" y="414"/><use href="#p" x="878" y="420"/><use href="#p" x="889" y="420"/><use href="#p" x="906" y="419"/><use href="#p" x="827" y="425"/><use href="#p" x="929" y="428"/><use href="#p" x="781" y="438"/><use href="#p" x="894" y="436"/><use href="#p" x="929" y="440"/><use href="#p" x="944" y="439"/><use href="#p" x="788" y="450"/><use href="#p" x="804" y="450"/><use href="#p" x="914" y="450"/><use href="#p" x="936" y="450"/><use href="#p" x="849" y="455"/><use href="#p" x="866" y="455"/><use href="#p" x="868" y="460"/><use href="#p" x="804" y="461"/><use href="#p" x="764" y="467"/><use href="#p" x="763" y="475"/><use href="#p" x="864" y="466"/><use href="#p" x="860" y="475"/><use href="#p" x="864" y="473"/><use href="#p" x="909" y="466"/><use href="#p" x="950" y="464"/><use href="#p" x="927" y="472"/><use href="#p" x="901" y="476"/><use href="#p" x="941" y="478"/><use href="#p" x="940" y="483"/><use href="#p" x="798" y="483"/><use href="#p" x="857" y="485"/><use href="#p" x="929" y="487"/><use href="#p" x="928" y="490"/><use href="#p" x="892" y="490"/><use href="#p" x="946" y="494"/><use href="#p" x="845" y="495"/><use href="#p" x="768" y="500"/><use href="#p" x="796" y="497"/><use href="#p" x="809" y="503"/><use href="#p" x="857" y="503"/><use href="#p" x="926" y="504"/><use href="#p" x="775" y="509"/><use href="#p" x="791" y="509"/><use href="#p" x="792" y="510"/><use href="#p" x="923" y="520"/><use href="#p" x="935" y="521"/><use href="#p" x="859" y="525"/><use href="#p" x="913" y="526"/><use href="#p" x="920" y="529"/><use href="#p" x="799" y="530"/><use href="#p" x="810" y="533"/><use href="#p" x="831" y="532"/><use href="#p" x="863" y="534"/><use href="#p" x="873" y="533"/><use href="#p" x="879" y="535"/><use href="#p" x="891" y="539"/><use href="#p" x="901" y="536"/><use href="#p" x="925" y="538"/><use href="#p" x="845" y="540"/><use href="#p" x="790" y="547"/><use href="#p" x="833" y="548"/><use href="#p" x="859" y="544"/><use href="#p" x="860" y="552"/><use href="#p" x="868" y="553"/><use href="#p" x="878" y="554"/><use href="#p" x="915" y="548"/><use href="#p" x="938" y="551"/><use href="#p" x="944" y="548"/><use href="#p" x="1014" y="370"/><use href="#p" x="1095" y="371"/><use href="#p" x="1121" y="371"/><use href="#p" x="1142" y="365"/><use href="#p" x="1035" y="378"/><use href="#p" x="1041" y="381"/><use href="#p" x="1050" y="382"/><use href="#p" x="1014" y="385"/><use href="#p" x="1031" y="386"/><use href="#p" x="1082" y="384"/><use href="#p" x="999" y="394"/><use href="#p" x="998" y="402"/><use href="#p" x="1011" y="404"/><use href="#p" x="969" y="405"/><use href="#p" x="972" y="408"/><use href="#p" x="1048" y="402"/><use href="#p" x="1058" y="402"/><use href="#p" x="1077" y="405"/><use href="#p" x="1122" y="396"/><use href="#p" x="1057" y="413"/><use href="#p" x="1057" y="421"/><use href="#p" x="1070" y="414"/><use href="#p" x="1081" y="419"/><use href="#p" x="1084" y="425"/><use href="#p" x="1093" y="418"/><use href="#p" x="955" y="424"/><use href="#p" x="975" y="428"/><use href="#p" x="1017" y="430"/><use href="#p" x="966" y="434"/><use href="#p" x="970" y="436"/><use href="#p" x="993" y="437"/><use href="#p" x="1002" y="437"/><use href="#p" x="1081" y="433"/><use href="#p" x="1079" y="440"/><use href="#p" x="1121" y="433"/><use href="#p" x="1133" y="433"/><use href="#p" x="1142" y="434"/><use href="#p" x="1146" y="431"/><use href="#p" x="1045" y="440"/><use href="#p" x="1062" y="448"/><use href="#p" x="1088" y="448"/><use href="#p" x="1039" y="450"/><use href="#p" x="1137" y="446"/><use href="#p" x="1139" y="449"/><use href="#p" x="1133" y="451"/><use href="#p" x="990" y="456"/><use href="#p" x="1119" y="456"/><use href="#p" x="1036" y="466"/><use href="#p" x="1101" y="467"/><use href="#p" x="1053" y="472"/><use href="#p" x="1106" y="477"/><use href="#p" x="1060" y="481"/><use href="#p" x="990" y="478"/><use href="#p" x="986" y="481"/><use href="#p" x="986" y="485"/><use href="#p" x="982" y="488"/><use href="#p" x="1011" y="476"/><use href="#p" x="1015" y="478"/><use href="#p" x="1022" y="482"/><use href="#p" x="1026" y="486"/><use href="#p" x="1029" y="479"/><use href="#p" x="1033" y="482"/><use href="#p" x="1015" y="489"/><use href="#p" x="1135" y="484"/><use href="#p" x="1144" y="481"/><use href="#p" x="1118" y="491"/><use href="#p" x="978" y="498"/><use href="#p" x="959" y="500"/><use href="#p" x="1044" y="501"/><use href="#p" x="1103" y="498"/><use href="#p" x="1118" y="500"/><use href="#p" x="1127" y="504"/><use href="#p" x="1018" y="504"/><use href="#p" x="1078" y="507"/><use href="#p" x="979" y="512"/><use href="#p" x="1006" y="512"/><use href="#p" x="1102" y="513"/><use href="#p" x="1102" y="519"/><use href="#p" x="1112" y="508"/><use href="#p" x="1113" y="513"/><use href="#p" x="1125" y="520"/><use href="#p" x="1142" y="519"/><use href="#p" x="1046" y="518"/><use href="#p" x="992" y="522"/><use href="#p" x="976" y="526"/><use href="#p" x="970" y="531"/><use href="#p" x="1053" y="530"/><use href="#p" x="1070" y="533"/><use href="#p" x="1068" y="539"/><use href="#p" x="992" y="536"/><use href="#p" x="993" y="537"/><use href="#p" x="984" y="541"/><use href="#p" x="1117" y="537"/><use href="#p" x="1124" y="541"/><use href="#p" x="1139" y="546"/><use href="#p" x="1014" y="547"/><use href="#p" x="1019" y="549"/><use href="#p" x="976" y="550"/><use href="#p" x="977" y="550"/><use href="#p" x="1085" y="553"/><use href="#p" x="1103" y="553"/><use href="#p" x="1160" y="370"/><use href="#p" x="1184" y="369"/><use href="#p" x="1181" y="374"/><use href="#p" x="1189" y="375"/><use href="#p" x="1173" y="387"/><use href="#p" x="1149" y="388"/><use href="#p" x="1244" y="385"/><use href="#p" x="1254" y="374"/><use href="#p" x="1260" y="379"/><use href="#p" x="1263" y="387"/><use href="#p" x="1258" y="389"/><use href="#p" x="1258" y="393"/><use href="#p" x="1314" y="392"/><use href="#p" x="1313" y="397"/><use href="#p" x="1338" y="398"/><use href="#p" x="1340" y="400"/><use href="#p" x="1148" y="400"/><use href="#p" x="1151" y="402"/><use href="#p" x="1191" y="402"/><use href="#p" x="1230" y="403"/><use href="#p" x="1236" y="402"/><use href="#p" x="1244" y="403"/><use href="#p" x="1252" y="409"/><use href="#p" x="1258" y="405"/><use href="#p" x="1265" y="402"/><use href="#p" x="1299" y="407"/><use href="#p" x="1299" y="409"/><use href="#p" x="1284" y="412"/><use href="#p" x="1337" y="414"/><use href="#p" x="1192" y="415"/><use href="#p" x="1230" y="413"/><use href="#p" x="1248" y="416"/><use href="#p" x="1149" y="419"/><use href="#p" x="1148" y="431"/><use href="#p" x="1167" y="434"/><use href="#p" x="1176" y="438"/><use href="#p" x="1189" y="437"/><use href="#p" x="1194" y="444"/><use href="#p" x="1194" y="447"/><use href="#p" x="1224" y="432"/><use href="#p" x="1238" y="435"/><use href="#p" x="1228" y="441"/><use href="#p" x="1233" y="440"/><use href="#p" x="1310" y="438"/><use href="#p" x="1316" y="439"/><use href="#p" x="1250" y="448"/><use href="#p" x="1280" y="450"/><use href="#p" x="1291" y="454"/><use href="#p" x="1295" y="450"/><use href="#p" x="1295" y="458"/><use href="#p" x="1282" y="458"/><use href="#p" x="1260" y="459"/><use href="#p" x="1338" y="451"/><use href="#p" x="1159" y="459"/><use href="#p" x="1177" y="466"/><use href="#p" x="1214" y="466"/><use href="#p" x="1169" y="472"/><use href="#p" x="1165" y="476"/><use href="#p" x="1179" y="480"/><use href="#p" x="1196" y="472"/><use href="#p" x="1200" y="476"/><use href="#p" x="1232" y="472"/><use href="#p" x="1248" y="471"/><use href="#p" x="1314" y="469"/><use href="#p" x="1317" y="466"/><use href="#p" x="1288" y="477"/><use href="#p" x="1176" y="490"/><use href="#p" x="1150" y="498"/><use href="#p" x="1163" y="500"/><use href="#p" x="1181" y="506"/><use href="#p" x="1249" y="509"/><use href="#p" x="1153" y="517"/><use href="#p" x="1168" y="517"/><use href="#p" x="1208" y="514"/><use href="#p" x="1207" y="520"/><use href="#p" x="1233" y="523"/><use href="#p" x="1232" y="527"/><use href="#p" x="1297" y="520"/><use href="#p" x="1276" y="530"/><use href="#p" x="1323" y="526"/><use href="#p" x="1323" y="533"/><use href="#p" x="1156" y="530"/><use href="#p" x="1173" y="530"/><use href="#p" x="1278" y="542"/><use href="#p" x="1288" y="540"/><use href="#p" x="1310" y="543"/><use href="#p" x="1175" y="552"/><use href="#p" x="1224" y="552"/><use href="#p" x="1218" y="555"/><use href="#p" x="1291" y="553"/><use href="#p" x="1296" y="550"/><use href="#p" x="1310" y="553"/><use href="#p" x="1413" y="366"/><use href="#p" x="1469" y="370"/><use href="#p" x="1497" y="375"/><use href="#p" x="1512" y="382"/><use href="#p" x="1521" y="380"/><use href="#p" x="1411" y="384"/><use href="#p" x="1442" y="390"/><use href="#p" x="1445" y="387"/><use href="#p" x="1450" y="390"/><use href="#p" x="1447" y="397"/><use href="#p" x="1470" y="386"/><use href="#p" x="1474" y="391"/><use href="#p" x="1502" y="390"/><use href="#p" x="1371" y="398"/><use href="#p" x="1376" y="403"/><use href="#p" x="1342" y="399"/><use href="#p" x="1424" y="398"/><use href="#p" x="1473" y="402"/><use href="#p" x="1479" y="406"/><use href="#p" x="1527" y="397"/><use href="#p" x="1534" y="399"/><use href="#p" x="1344" y="410"/><use href="#p" x="1424" y="411"/><use href="#p" x="1462" y="411"/><use href="#p" x="1495" y="413"/><use href="#p" x="1345" y="424"/><use href="#p" x="1470" y="426"/><use href="#p" x="1454" y="448"/><use href="#p" x="1485" y="449"/><use href="#p" x="1507" y="448"/><use href="#p" x="1441" y="456"/><use href="#p" x="1459" y="458"/><use href="#p" x="1464" y="463"/><use href="#p" x="1505" y="458"/><use href="#p" x="1420" y="463"/><use href="#p" x="1514" y="467"/><use href="#p" x="1491" y="470"/><use href="#p" x="1353" y="468"/><use href="#p" x="1352" y="475"/><use href="#p" x="1397" y="473"/><use href="#p" x="1399" y="470"/><use href="#p" x="1427" y="476"/><use href="#p" x="1454" y="473"/><use href="#p" x="1478" y="478"/><use href="#p" x="1484" y="484"/><use href="#p" x="1502" y="476"/><use href="#p" x="1457" y="483"/><use href="#p" x="1412" y="484"/><use href="#p" x="1451" y="490"/><use href="#p" x="1365" y="492"/><use href="#p" x="1367" y="499"/><use href="#p" x="1378" y="504"/><use href="#p" x="1414" y="500"/><use href="#p" x="1442" y="502"/><use href="#p" x="1456" y="507"/><use href="#p" x="1422" y="509"/><use href="#p" x="1428" y="515"/><use href="#p" x="1495" y="518"/><use href="#p" x="1476" y="522"/><use href="#p" x="1481" y="519"/><use href="#p" x="1363" y="522"/><use href="#p" x="1401" y="525"/><use href="#p" x="1439" y="527"/><use href="#p" x="1466" y="528"/><use href="#p" x="1428" y="532"/><use href="#p" x="1514" y="538"/><use href="#p" x="1445" y="546"/><use href="#p" x="1430" y="550"/><use href="#p" x="1390" y="550"/><use href="#p" x="1385" y="553"/><use href="#p" x="1435" y="554"/><use href="#p" x="1457" y="556"/><use href="#p" x="1487" y="555"/><use href="#p" x="1510" y="555"/><use href="#p" x="780" y="568"/><use href="#p" x="807" y="569"/><use href="#p" x="820" y="573"/><use href="#p" x="842" y="562"/><use href="#p" x="845" y="566"/><use href="#p" x="863" y="561"/><use href="#p" x="897" y="561"/><use href="#p" x="898" y="559"/><use href="#p" x="936" y="568"/><use href="#p" x="866" y="574"/><use href="#p" x="937" y="581"/><use href="#p" x="840" y="586"/><use href="#p" x="862" y="585"/><use href="#p" x="860" y="590"/><use href="#p" x="773" y="590"/><use href="#p" x="775" y="596"/><use href="#p" x="811" y="597"/><use href="#p" x="809" y="605"/><use href="#p" x="809" y="603"/><use href="#p" x="904" y="594"/><use href="#p" x="924" y="598"/><use href="#p" x="862" y="601"/><use href="#p" x="859" y="606"/><use href="#p" x="881" y="602"/><use href="#p" x="887" y="608"/><use href="#p" x="885" y="613"/><use href="#p" x="896" y="605"/><use href="#p" x="864" y="610"/><use href="#p" x="844" y="611"/><use href="#p" x="770" y="613"/><use href="#p" x="764" y="620"/><use href="#p" x="785" y="612"/><use href="#p" x="789" y="613"/><use href="#p" x="788" y="618"/><use href="#p" x="811" y="622"/><use href="#p" x="864" y="622"/><use href="#p" x="777" y="630"/><use href="#p" x="800" y="628"/><use href="#p" x="791" y="634"/><use href="#p" x="792" y="636"/><use href="#p" x="901" y="634"/><use href="#p" x="838" y="639"/><use href="#p" x="861" y="636"/><use href="#p" x="852" y="644"/><use href="#p" x="870" y="649"/><use href="#p" x="833" y="650"/><use href="#p" x="787" y="649"/><use href="#p" x="814" y="654"/><use href="#p" x="820" y="653"/><use href="#p" x="915" y="650"/><use href="#p" x="921" y="655"/><use href="#p" x="950" y="644"/><use href="#p" x="947" y="657"/><use href="#p" x="952" y="655"/><use href="#p" x="767" y="655"/><use href="#p" x="762" y="659"/><use href="#p" x="907" y="660"/><use href="#p" x="909" y="665"/><use href="#p" x="777" y="665"/><use href="#p" x="772" y="673"/><use href="#p" x="761" y="676"/><use href="#p" x="803" y="670"/><use href="#p" x="802" y="674"/><use href="#p" x="933" y="672"/><use href="#p" x="805" y="682"/><use href="#p" x="820" y="680"/><use href="#p" x="828" y="682"/><use href="#p" x="770" y="687"/><use href="#p" x="810" y="689"/><use href="#p" x="852" y="689"/><use href="#p" x="856" y="688"/><use href="#p" x="905" y="695"/><use href="#p" x="795" y="700"/><use href="#p" x="798" y="706"/><use href="#p" x="845" y="703"/><use href="#p" x="881" y="701"/><use href="#p" x="880" y="707"/><use href="#p" x="917" y="707"/><use href="#p" x="767" y="715"/><use href="#p" x="775" y="716"/><use href="#p" x="829" y="713"/><use href="#p" x="832" y="719"/><use href="#p" x="840" y="711"/><use href="#p" x="852" y="712"/><use href="#p" x="905" y="713"/><use href="#p" x="916" y="717"/><use href="#p" x="921" y="720"/><use href="#p" x="952" y="711"/><use href="#p" x="796" y="722"/><use href="#p" x="806" y="723"/><use href="#p" x="807" y="721"/><use href="#p" x="870" y="724"/><use href="#p" x="873" y="722"/><use href="#p" x="875" y="726"/><use href="#p" x="779" y="729"/><use href="#p" x="784" y="733"/><use href="#p" x="775" y="737"/><use href="#p" x="857" y="731"/><use href="#p" x="862" y="731"/><use href="#p" x="898" y="732"/><use href="#p" x="897" y="738"/><use href="#p" x="938" y="727"/><use href="#p" x="933" y="733"/><use href="#p" x="883" y="737"/><use href="#p" x="921" y="735"/><use href="#p" x="918" y="744"/><use href="#p" x="923" y="743"/><use href="#p" x="926" y="743"/><use href="#p" x="850" y="741"/><use href="#p" x="853" y="737"/><use href="#p" x="885" y="747"/><use href="#p" x="890" y="745"/><use href="#p" x="765" y="749"/><use href="#p" x="960" y="561"/><use href="#p" x="960" y="569"/><use href="#p" x="960" y="572"/><use href="#p" x="973" y="566"/><use href="#p" x="1008" y="562"/><use href="#p" x="1007" y="566"/><use href="#p" x="1012" y="571"/><use href="#p" x="1039" y="560"/><use href="#p" x="1049" y="562"/><use href="#p" x="1052" y="562"/><use href="#p" x="1063" y="564"/><use href="#p" x="1105" y="567"/><use href="#p" x="1064" y="576"/><use href="#p" x="1141" y="580"/><use href="#p" x="1144" y="579"/><use href="#p" x="1123" y="586"/><use href="#p" x="960" y="587"/><use href="#p" x="960" y="590"/><use href="#p" x="989" y="585"/><use href="#p" x="993" y="582"/><use href="#p" x="979" y="590"/><use href="#p" x="990" y="593"/><use href="#p" x="981" y="598"/><use href="#p" x="955" y="595"/><use href="#p" x="1016" y="596"/><use href="#p" x="1002" y="602"/><use href="#p" x="972" y="606"/><use href="#p" x="957" y="609"/><use href="#p" x="956" y="614"/><use href="#p" x="990" y="611"/><use href="#p" x="999" y="610"/><use href="#p" x="1043" y="608"/><use href="#p" x="1060" y="614"/><use href="#p" x="1144" y="607"/><use href="#p" x="1019" y="620"/><use href="#p" x="1025" y="623"/><use href="#p" x="1051" y="624"/><use href="#p" x="1066" y="630"/><use href="#p" x="1111" y="618"/><use href="#p" x="1127" y="621"/><use href="#p" x="1115" y="633"/><use href="#p" x="1127" y="631"/><use href="#p" x="980" y="624"/><use href="#p" x="984" y="632"/><use href="#p" x="991" y="632"/><use href="#p" x="1010" y="640"/><use href="#p" x="1045" y="638"/><use href="#p" x="1090" y="638"/><use href="#p" x="985" y="643"/><use href="#p" x="1003" y="649"/><use href="#p" x="1018" y="647"/><use href="#p" x="1027" y="649"/><use href="#p" x="1019" y="657"/><use href="#p" x="1078" y="644"/><use href="#p" x="1096" y="652"/><use href="#p" x="1126" y="650"/><use href="#p" x="1137" y="652"/><use href="#p" x="956" y="662"/><use href="#p" x="956" y="666"/><use href="#p" x="1077" y="656"/><use href="#p" x="1079" y="664"/><use href="#p" x="1101" y="664"/><use href="#p" x="1113" y="668"/><use href="#p" x="1016" y="665"/><use href="#p" x="1032" y="672"/><use href="#p" x="1053" y="678"/><use href="#p" x="1122" y="676"/><use href="#p" x="995" y="681"/><use href="#p" x="1018" y="686"/><use href="#p" x="1036" y="687"/><use href="#p" x="1120" y="686"/><use href="#p" x="1129" y="690"/><use href="#p" x="1042" y="704"/><use href="#p" x="1101" y="701"/><use href="#p" x="1104" y="701"/><use href="#p" x="1139" y="706"/><use href="#p" x="954" y="710"/><use href="#p" x="996" y="713"/><use href="#p" x="1126" y="709"/><use href="#p" x="1128" y="711"/><use href="#p" x="1093" y="721"/><use href="#p" x="987" y="728"/><use href="#p" x="999" y="724"/><use href="#p" x="1102" y="727"/><use href="#p" x="1129" y="727"/><use href="#p" x="1141" y="725"/><use href="#p" x="958" y="731"/><use href="#p" x="959" y="733"/><use href="#p" x="1006" y="734"/><use href="#p" x="1036" y="730"/><use href="#p" x="1038" y="732"/><use href="#p" x="1040" y="735"/><use href="#p" x="1063" y="729"/><use href="#p" x="1061" y="736"/><use href="#p" x="1121" y="737"/><use href="#p" x="984" y="744"/><use href="#p" x="994" y="749"/><use href="#p" x="1155" y="564"/><use href="#p" x="1297" y="559"/><use href="#p" x="1309" y="566"/><use href="#p" x="1286" y="571"/><use href="#p" x="1282" y="575"/><use href="#p" x="1329" y="574"/><use href="#p" x="1313" y="579"/><use href="#p" x="1304" y="583"/><use href="#p" x="1187" y="581"/><use href="#p" x="1204" y="590"/><use href="#p" x="1191" y="596"/><use href="#p" x="1190" y="602"/><use href="#p" x="1193" y="609"/><use href="#p" x="1258" y="594"/><use href="#p" x="1244" y="602"/><use href="#p" x="1315" y="590"/><use href="#p" x="1318" y="596"/><use href="#p" x="1324" y="604"/><use href="#p" x="1329" y="606"/><use href="#p" x="1340" y="608"/><use href="#p" x="1340" y="617"/><use href="#p" x="1271" y="605"/><use href="#p" x="1272" y="611"/><use href="#p" x="1275" y="620"/><use href="#p" x="1236" y="615"/><use href="#p" x="1244" y="613"/><use href="#p" x="1260" y="613"/><use href="#p" x="1311" y="619"/><use href="#p" x="1319" y="622"/><use href="#p" x="1319" y="628"/><use href="#p" x="1252" y="626"/><use href="#p" x="1163" y="626"/><use href="#p" x="1195" y="630"/><use href="#p" x="1215" y="635"/><use href="#p" x="1151" y="640"/><use href="#p" x="1153" y="647"/><use href="#p" x="1170" y="651"/><use href="#p" x="1187" y="649"/><use href="#p" x="1200" y="652"/><use href="#p" x="1254" y="651"/><use href="#p" x="1232" y="656"/><use href="#p" x="1294" y="639"/><use href="#p" x="1292" y="644"/><use href="#p" x="1311" y="641"/><use href="#p" x="1314" y="639"/><use href="#p" x="1318" y="645"/><use href="#p" x="1300" y="656"/><use href="#p" x="1296" y="660"/><use href="#p" x="1339" y="658"/><use href="#p" x="1217" y="660"/><use href="#p" x="1194" y="666"/><use href="#p" x="1279" y="666"/><use href="#p" x="1320" y="668"/><use href="#p" x="1273" y="673"/><use href="#p" x="1340" y="673"/><use href="#p" x="1187" y="675"/><use href="#p" x="1182" y="679"/><use href="#p" x="1207" y="682"/><use href="#p" x="1205" y="685"/><use href="#p" x="1315" y="677"/><use href="#p" x="1306" y="681"/><use href="#p" x="1286" y="682"/><use href="#p" x="1288" y="683"/><use href="#p" x="1320" y="686"/><use href="#p" x="1323" y="683"/><use href="#p" x="1335" y="688"/><use href="#p" x="1196" y="688"/><use href="#p" x="1226" y="692"/><use href="#p" x="1295" y="690"/><use href="#p" x="1249" y="696"/><use href="#p" x="1313" y="695"/><use href="#p" x="1204" y="700"/><use href="#p" x="1241" y="703"/><use href="#p" x="1272" y="702"/><use href="#p" x="1308" y="706"/><use href="#p" x="1239" y="710"/><use href="#p" x="1230" y="714"/><use href="#p" x="1292" y="713"/><use href="#p" x="1312" y="720"/><use href="#p" x="1153" y="722"/><use href="#p" x="1154" y="727"/><use href="#p" x="1178" y="723"/><use href="#p" x="1209" y="722"/><use href="#p" x="1249" y="726"/><use href="#p" x="1255" y="730"/><use href="#p" x="1334" y="727"/><use href="#p" x="1195" y="731"/><use href="#p" x="1154" y="736"/><use href="#p" x="1221" y="736"/><use href="#p" x="1285" y="733"/><use href="#p" x="1290" y="733"/><use href="#p" x="1313" y="734"/><use href="#p" x="1186" y="740"/><use href="#p" x="1190" y="741"/><use href="#p" x="1336" y="740"/><use href="#p" x="1276" y="749"/><use href="#p" x="1356" y="565"/><use href="#p" x="1383" y="562"/><use href="#p" x="1383" y="565"/><use href="#p" x="1347" y="574"/><use href="#p" x="1407" y="573"/><use href="#p" x="1403" y="578"/><use href="#p" x="1401" y="586"/><use href="#p" x="1384" y="583"/><use href="#p" x="1476" y="563"/><use href="#p" x="1480" y="569"/><use href="#p" x="1461" y="573"/><use href="#p" x="1489" y="570"/><use href="#p" x="1492" y="577"/><use href="#p" x="1495" y="583"/><use href="#p" x="1496" y="590"/><use href="#p" x="1509" y="581"/><use href="#p" x="1527" y="569"/><use href="#p" x="1532" y="582"/><use href="#p" x="1344" y="591"/><use href="#p" x="1383" y="594"/><use href="#p" x="1356" y="597"/><use href="#p" x="1351" y="602"/><use href="#p" x="1346" y="605"/><use href="#p" x="1380" y="606"/><use href="#p" x="1394" y="604"/><use href="#p" x="1401" y="602"/><use href="#p" x="1397" y="611"/><use href="#p" x="1425" y="589"/><use href="#p" x="1441" y="593"/><use href="#p" x="1441" y="599"/><use href="#p" x="1435" y="605"/><use href="#p" x="1532" y="595"/><use href="#p" x="1342" y="617"/><use href="#p" x="1507" y="613"/><use href="#p" x="1465" y="617"/><use href="#p" x="1427" y="621"/><use href="#p" x="1431" y="621"/><use href="#p" x="1380" y="626"/><use href="#p" x="1444" y="629"/><use href="#p" x="1497" y="631"/><use href="#p" x="1503" y="628"/><use href="#p" x="1518" y="635"/><use href="#p" x="1374" y="635"/><use href="#p" x="1345" y="643"/><use href="#p" x="1349" y="643"/><use href="#p" x="1405" y="650"/><use href="#p" x="1374" y="654"/><use href="#p" x="1453" y="649"/><use href="#p" x="1452" y="652"/><use href="#p" x="1471" y="649"/><use href="#p" x="1474" y="653"/><use href="#p" x="1476" y="643"/><use href="#p" x="1508" y="646"/><use href="#p" x="1507" y="653"/><use href="#p" x="1499" y="656"/><use href="#p" x="1349" y="661"/><use href="#p" x="1454" y="663"/><use href="#p" x="1528" y="667"/><use href="#p" x="1353" y="670"/><use href="#p" x="1404" y="669"/><use href="#p" x="1404" y="679"/><use href="#p" x="1430" y="676"/><use href="#p" x="1448" y="677"/><use href="#p" x="1485" y="672"/><use href="#p" x="1491" y="674"/><use href="#p" x="1513" y="678"/><use href="#p" x="1342" y="674"/><use href="#p" x="1350" y="686"/><use href="#p" x="1348" y="694"/><use href="#p" x="1358" y="692"/><use href="#p" x="1370" y="688"/><use href="#p" x="1473" y="682"/><use href="#p" x="1505" y="683"/><use href="#p" x="1443" y="684"/><use href="#p" x="1435" y="689"/><use href="#p" x="1420" y="694"/><use href="#p" x="1447" y="694"/><use href="#p" x="1477" y="693"/><use href="#p" x="1484" y="693"/><use href="#p" x="1497" y="697"/><use href="#p" x="1504" y="695"/><use href="#p" x="1519" y="689"/><use href="#p" x="1522" y="688"/><use href="#p" x="1520" y="704"/><use href="#p" x="1381" y="706"/><use href="#p" x="1433" y="706"/><use href="#p" x="1465" y="708"/><use href="#p" x="1441" y="713"/><use href="#p" x="1381" y="719"/><use href="#p" x="1395" y="717"/><use href="#p" x="1415" y="717"/><use href="#p" x="1450" y="719"/><use href="#p" x="1469" y="718"/><use href="#p" x="1442" y="723"/><use href="#p" x="1420" y="726"/><use href="#p" x="1512" y="720"/><use href="#p" x="1515" y="722"/><use href="#p" x="1345" y="730"/><use href="#p" x="1356" y="731"/><use href="#p" x="1475" y="732"/><use href="#p" x="1395" y="739"/><use href="#p" x="1408" y="738"/><use href="#p" x="1415" y="734"/><use href="#p" x="1434" y="738"/><use href="#p" x="1446" y="744"/><use href="#p" x="1353" y="745"/><use href="#p" x="1369" y="748"/><use href="#p" x="1439" y="749"/><use href="#p" x="1479" y="745"/><use href="#p" x="1488" y="742"/><use href="#p" x="1498" y="742"/><use href="#p" x="1503" y="749"/><use href="#p" x="796" y="755"/><use href="#p" x="850" y="755"/><use href="#p" x="853" y="758"/><use href="#p" x="864" y="757"/><use href="#p" x="880" y="762"/><use href="#p" x="905" y="762"/><use href="#p" x="943" y="754"/><use href="#p" x="829" y="779"/><use href="#p" x="857" y="783"/><use href="#p" x="874" y="781"/><use href="#p" x="882" y="786"/><use href="#p" x="906" y="778"/><use href="#p" x="921" y="782"/><use href="#p" x="914" y="789"/><use href="#p" x="772" y="789"/><use href="#p" x="774" y="787"/><use href="#p" x="790" y="791"/><use href="#p" x="816" y="789"/><use href="#p" x="868" y="791"/><use href="#p" x="898" y="797"/><use href="#p" x="950" y="797"/><use href="#p" x="844" y="796"/><use href="#p" x="843" y="803"/><use href="#p" x="855" y="804"/><use href="#p" x="887" y="802"/><use href="#p" x="912" y="798"/><use href="#p" x="913" y="804"/><use href="#p" x="787" y="807"/><use href="#p" x="775" y="813"/><use href="#p" x="876" y="809"/><use href="#p" x="905" y="811"/><use href="#p" x="917" y="813"/><use href="#p" x="924" y="809"/><use href="#p" x="763" y="822"/><use href="#p" x="771" y="829"/><use href="#p" x="791" y="821"/><use href="#p" x="796" y="819"/><use href="#p" x="796" y="824"/><use href="#p" x="848" y="823"/><use href="#p" x="847" y="827"/><use href="#p" x="841" y="834"/><use href="#p" x="842" y="842"/><use href="#p" x="836" y="839"/><use href="#p" x="850" y="837"/><use href="#p" x="931" y="835"/><use href="#p" x="865" y="839"/><use href="#p" x="866" y="842"/><use href="#p" x="861" y="844"/><use href="#p" x="860" y="850"/><use href="#p" x="858" y="856"/><use href="#p" x="873" y="850"/><use href="#p" x="903" y="849"/><use href="#p" x="909" y="854"/><use href="#p" x="888" y="854"/><use href="#p" x="922" y="851"/><use href="#p" x="943" y="847"/><use href="#p" x="823" y="852"/><use href="#p" x="797" y="854"/><use href="#p" x="770" y="859"/><use href="#p" x="810" y="860"/><use href="#p" x="820" y="863"/><use href="#p" x="832" y="859"/><use href="#p" x="760" y="867"/><use href="#p" x="788" y="866"/><use href="#p" x="836" y="869"/><use href="#p" x="840" y="866"/><use href="#p" x="901" y="863"/><use href="#p" x="889" y="872"/><use href="#p" x="917" y="873"/><use href="#p" x="847" y="874"/><use href="#p" x="847" y="878"/><use href="#p" x="856" y="876"/><use href="#p" x="855" y="884"/><use href="#p" x="867" y="875"/><use href="#p" x="869" y="882"/><use href="#p" x="948" y="886"/><use href="#p" x="772" y="889"/><use href="#p" x="782" y="888"/><use href="#p" x="828" y="891"/><use href="#p" x="875" y="892"/><use href="#p" x="879" y="892"/><use href="#p" x="905" y="895"/><use href="#p" x="821" y="898"/><use href="#p" x="799" y="901"/><use href="#p" x="827" y="904"/><use href="#p" x="807" y="907"/><use href="#p" x="857" y="905"/><use href="#p" x="783" y="909"/><use href="#p" x="850" y="911"/><use href="#p" x="924" y="906"/><use href="#p" x="891" y="910"/><use href="#p" x="888" y="914"/><use href="#p" x="892" y="917"/><use href="#p" x="838" y="916"/><use href="#p" x="835" y="922"/><use href="#p" x="879" y="925"/><use href="#p" x="927" y="923"/><use href="#p" x="932" y="929"/><use href="#p" x="761" y="928"/><use href="#p" x="787" y="927"/><use href="#p" x="803" y="934"/><use href="#p" x="809" y="935"/><use href="#p" x="827" y="938"/><use href="#p" x="833" y="936"/><use href="#p" x="861" y="936"/><use href="#p" x="927" y="936"/><use href="#p" x="817" y="942"/><use href="#p" x="951" y="941"/><use href="#p" x="986" y="761"/><use href="#p" x="990" y="770"/><use href="#p" x="1021" y="765"/><use href="#p" x="1024" y="778"/><use href="#p" x="1070" y="763"/><use href="#p" x="1103" y="760"/><use href="#p" x="1107" y="777"/><use href="#p" x="1131" y="777"/><use href="#p" x="1079" y="781"/><use href="#p" x="1080" y="787"/><use href="#p" x="1096" y="783"/><use href="#p" x="1094" y="789"/><use href="#p" x="977" y="791"/><use href="#p" x="1055" y="797"/><use href="#p" x="1120" y="797"/><use href="#p" x="1139" y="796"/><use href="#p" x="955" y="800"/><use href="#p" x="973" y="804"/><use href="#p" x="975" y="804"/><use href="#p" x="1018" y="806"/><use href="#p" x="1020" y="807"/><use href="#p" x="1022" y="814"/><use href="#p" x="998" y="813"/><use href="#p" x="1044" y="811"/><use href="#p" x="1044" y="818"/><use href="#p" x="1061" y="814"/><use href="#p" x="1069" y="805"/><use href="#p" x="1082" y="808"/><use href="#p" x="1103" y="811"/><use href="#p" x="1106" y="815"/><use href="#p" x="1116" y="807"/><use href="#p" x="1146" y="803"/><use href="#p" x="1146" y="816"/><use href="#p" x="1146" y="827"/><use href="#p" x="1090" y="822"/><use href="#p" x="986" y="824"/><use href="#p" x="996" y="828"/><use href="#p" x="985" y="835"/><use href="#p" x="1047" y="836"/><use href="#p" x="1075" y="831"/><use href="#p" x="1137" y="836"/><use href="#p" x="1001" y="840"/><use href="#p" x="995" y="848"/><use href="#p" x="1007" y="849"/><use href="#p" x="1019" y="845"/><use href="#p" x="1051" y="853"/><use href="#p" x="1063" y="851"/><use href="#p" x="1070" y="857"/><use href="#p" x="1110" y="848"/><use href="#p" x="958" y="859"/><use href="#p" x="1079" y="867"/><use href="#p" x="982" y="884"/><use href="#p" x="995" y="878"/><use href="#p" x="1005" y="878"/><use href="#p" x="1010" y="882"/><use href="#p" x="1014" y="883"/><use href="#p" x="979" y="893"/><use href="#p" x="1057" y="893"/><use href="#p" x="1066" y="891"/><use href="#p" x="1105" y="896"/><use href="#p" x="1124" y="892"/><use href="#p" x="1127" y="890"/><use href="#p" x="1130" y="894"/><use href="#p" x="1141" y="889"/><use href="#p" x="1146" y="897"/><use href="#p" x="1004" y="901"/><use href="#p" x="1075" y="907"/><use href="#p" x="1079" y="905"/><use href="#p" x="960" y="908"/><use href="#p" x="1127" y="910"/><use href="#p" x="1013" y="915"/><use href="#p" x="1025" y="912"/><use href="#p" x="1027" y="912"/><use href="#p" x="1047" y="913"/><use href="#p" x="1050" y="916"/><use href="#p" x="1053" y="912"/><use href="#p" x="1042" y="919"/><use href="#p" x="1044" y="925"/><use href="#p" x="972" y="921"/><use href="#p" x="975" y="917"/><use href="#p" x="990" y="922"/><use href="#p" x="1071" y="921"/><use href="#p" x="1087" y="926"/><use href="#p" x="1029" y="928"/><use href="#p" x="1014" y="931"/><use href="#p" x="1055" y="929"/><use href="#p" x="977" y="934"/><use href="#p" x="1037" y="939"/><use href="#p" x="1043" y="939"/><use href="#p" x="1118" y="937"/><use href="#p" x="1118" y="940"/><use href="#p" x="1252" y="759"/><use href="#p" x="1265" y="759"/><use href="#p" x="1256" y="766"/><use href="#p" x="1245" y="769"/><use href="#p" x="1277" y="755"/><use href="#p" x="1281" y="758"/><use href="#p" x="1296" y="760"/><use href="#p" x="1296" y="767"/><use href="#p" x="1310" y="760"/><use href="#p" x="1312" y="764"/><use href="#p" x="1310" y="772"/><use href="#p" x="1323" y="771"/><use href="#p" x="1333" y="780"/><use href="#p" x="1175" y="770"/><use href="#p" x="1222" y="770"/><use href="#p" x="1153" y="775"/><use href="#p" x="1151" y="779"/><use href="#p" x="1154" y="784"/><use href="#p" x="1160" y="788"/><use href="#p" x="1164" y="783"/><use href="#p" x="1277" y="777"/><use href="#p" x="1264" y="787"/><use href="#p" x="1202" y="794"/><use href="#p" x="1222" y="797"/><use href="#p" x="1232" y="798"/><use href="#p" x="1240" y="794"/><use href="#p" x="1148" y="803"/><use href="#p" x="1159" y="808"/><use href="#p" x="1197" y="806"/><use href="#p" x="1275" y="806"/><use href="#p" x="1272" y="812"/><use href="#p" x="1285" y="817"/><use href="#p" x="1320" y="816"/><use href="#p" x="1340" y="817"/><use href="#p" x="1148" y="817"/><use href="#p" x="1212" y="820"/><use href="#p" x="1148" y="828"/><use href="#p" x="1183" y="828"/><use href="#p" x="1221" y="829"/><use href="#p" x="1222" y="830"/><use href="#p" x="1250" y="830"/><use href="#p" x="1303" y="828"/><use href="#p" x="1323" y="827"/><use href="#p" x="1321" y="833"/><use href="#p" x="1288" y="835"/><use href="#p" x="1284" y="840"/><use href="#p" x="1318" y="839"/><use href="#p" x="1322" y="842"/><use href="#p" x="1179" y="844"/><use href="#p" x="1159" y="849"/><use href="#p" x="1162" y="847"/><use href="#p" x="1190" y="854"/><use href="#p" x="1294" y="849"/><use href="#p" x="1296" y="848"/><use href="#p" x="1301" y="845"/><use href="#p" x="1308" y="848"/><use href="#p" x="1319" y="851"/><use href="#p" x="1335" y="856"/><use href="#p" x="1338" y="859"/><use href="#p" x="1337" y="864"/><use href="#p" x="1293" y="863"/><use href="#p" x="1293" y="867"/><use href="#p" x="1300" y="863"/><use href="#p" x="1203" y="868"/><use href="#p" x="1208" y="874"/><use href="#p" x="1151" y="875"/><use href="#p" x="1195" y="876"/><use href="#p" x="1232" y="879"/><use href="#p" x="1340" y="876"/><use href="#p" x="1325" y="889"/><use href="#p" x="1148" y="897"/><use href="#p" x="1190" y="902"/><use href="#p" x="1211" y="901"/><use href="#p" x="1217" y="897"/><use href="#p" x="1243" y="900"/><use href="#p" x="1274" y="898"/><use href="#p" x="1275" y="902"/><use href="#p" x="1335" y="897"/><use href="#p" x="1301" y="912"/><use href="#p" x="1338" y="912"/><use href="#p" x="1231" y="916"/><use href="#p" x="1247" y="922"/><use href="#p" x="1273" y="923"/><use href="#p" x="1151" y="923"/><use href="#p" x="1221" y="927"/><use href="#p" x="1224" y="933"/><use href="#p" x="1233" y="930"/><use href="#p" x="1252" y="932"/><use href="#p" x="1197" y="935"/><use href="#p" x="1291" y="930"/><use href="#p" x="1293" y="934"/><use href="#p" x="1288" y="938"/><use href="#p" x="1321" y="933"/><use href="#p" x="1334" y="935"/><use href="#p" x="1179" y="939"/><use href="#p" x="1182" y="943"/><use href="#p" x="1204" y="942"/><use href="#p" x="1219" y="939"/><use href="#p" x="1228" y="941"/><use href="#p" x="1328" y="942"/><use href="#p" x="1387" y="755"/><use href="#p" x="1404" y="760"/><use href="#p" x="1371" y="763"/><use href="#p" x="1450" y="759"/><use href="#p" x="1468" y="763"/><use href="#p" x="1476" y="770"/><use href="#p" x="1495" y="761"/><use href="#p" x="1514" y="770"/><use href="#p" x="1353" y="775"/><use href="#p" x="1372" y="782"/><use href="#p" x="1492" y="785"/><use href="#p" x="1451" y="792"/><use href="#p" x="1460" y="790"/><use href="#p" x="1464" y="790"/><use href="#p" x="1457" y="799"/><use href="#p" x="1344" y="797"/><use href="#p" x="1348" y="805"/><use href="#p" x="1348" y="813"/><use href="#p" x="1370" y="802"/><use href="#p" x="1375" y="804"/><use href="#p" x="1395" y="810"/><use href="#p" x="1446" y="810"/><use href="#p" x="1474" y="814"/><use href="#p" x="1505" y="814"/><use href="#p" x="1507" y="813"/><use href="#p" x="1519" y="805"/><use href="#p" x="1532" y="814"/><use href="#p" x="1342" y="817"/><use href="#p" x="1374" y="814"/><use href="#p" x="1374" y="818"/><use href="#p" x="1362" y="824"/><use href="#p" x="1360" y="831"/><use href="#p" x="1357" y="838"/><use href="#p" x="1393" y="836"/><use href="#p" x="1510" y="824"/><use href="#p" x="1519" y="837"/><use href="#p" x="1377" y="844"/><use href="#p" x="1382" y="854"/><use href="#p" x="1421" y="841"/><use href="#p" x="1442" y="847"/><use href="#p" x="1450" y="843"/><use href="#p" x="1456" y="840"/><use href="#p" x="1474" y="840"/><use href="#p" x="1486" y="847"/><use href="#p" x="1417" y="855"/><use href="#p" x="1458" y="854"/><use href="#p" x="1365" y="867"/><use href="#p" x="1533" y="864"/><use href="#p" x="1533" y="867"/><use href="#p" x="1397" y="875"/><use href="#p" x="1342" y="876"/><use href="#p" x="1348" y="875"/><use href="#p" x="1348" y="881"/><use href="#p" x="1348" y="887"/><use href="#p" x="1438" y="884"/><use href="#p" x="1451" y="883"/><use href="#p" x="1455" y="887"/><use href="#p" x="1459" y="882"/><use href="#p" x="1487" y="884"/><use href="#p" x="1516" y="891"/><use href="#p" x="1519" y="898"/><use href="#p" x="1369" y="893"/><use href="#p" x="1369" y="892"/><use href="#p" x="1378" y="896"/><use href="#p" x="1380" y="896"/><use href="#p" x="1378" y="903"/><use href="#p" x="1383" y="907"/><use href="#p" x="1374" y="910"/><use href="#p" x="1392" y="910"/><use href="#p" x="1412" y="907"/><use href="#p" x="1425" y="904"/><use href="#p" x="1439" y="905"/><use href="#p" x="1447" y="907"/><use href="#p" x="1453" y="902"/><use href="#p" x="1451" y="915"/><use href="#p" x="1487" y="908"/><use href="#p" x="1496" y="905"/><use href="#p" x="1473" y="913"/><use href="#p" x="1476" y="912"/><use href="#p" x="1475" y="916"/><use href="#p" x="1522" y="915"/><use href="#p" x="1527" y="913"/><use href="#p" x="1416" y="927"/><use href="#p" x="1417" y="933"/><use href="#p" x="1428" y="939"/><use href="#p" x="1438" y="941"/><use href="#p" x="1441" y="938"/><use href="#p" x="1456" y="938"/><use href="#p" x="1392" y="942"/><use href="#p" x="1503" y="942"/></g></svg><div style="position:absolute;left:1896px;top:153px;width:19px;height:802px;box-sizing:border-box;background:#f0f0f0"></div><div style="position:absolute;left:1896px;top:174px;width:19px;height:746px;box-sizing:border-box;background:#cdcdcd"></div><svg style="position:absolute;left:1896px;top:153px" width="19" height="802"><path d="M5 14 L9.5 9.5 L14 14" fill="none" stroke="#606060" stroke-width="2"/><path d="M5 787 L9.5 791.5 L14 787" fill="none" stroke="#606060" stroke-width="2"/></svg><div style="position:absolute;left:0px;top:956px;width:1920px;height:76px;box-sizing:border-box;background:#f0f0f0"></div><svg style="position:absolute;left:4px;top:955px" width="24" height="6"><polygon points="2,5 5,1 8,5" fill="#000"/><polygon points="14,1 20,1 17,5" fill="#000"/></svg><div style="position:absolute;left:2px;top:960px;width:1914px;height:1px;box-sizing:border-box;background:#6e6e6e"></div><div style="position:absolute;left:2px;top:960px;width:1px;height:18px;box-sizing:border-box;background:#6e6e6e"></div><div style="position:absolute;left:0px;top:956px;width:1px;height:72px;box-sizing:border-box;background:#d6d6d6"></div><div style="position:absolute;left:1917px;top:956px;width:1px;height:72px;box-sizing:border-box;background:#d6d6d6"></div><div style="position:absolute;left:2px;top:961px;width:1842px;height:16px;box-sizing:border-box;background:#bbbbe5"></div><div style="position:absolute;left:1844px;top:961px;width:72px;height:16px;box-sizing:border-box;background:#ececec"></div><div class="t" style="left:3.5px;top:963.2px;font-size:11.6px;color:#000;font-weight:700;font-family:'Liberation Sans',sans-serif;">Command Center</div><div style="position:absolute;left:1845px;top:963px;width:15px;height:13px;box-sizing:border-box;background:#e1e1e1;border:1px solid #adadad"></div><svg style="position:absolute;left:1846px;top:964px" width="13" height="11"><path d="M2 10 L11 1 M7 1 H11 V5 M2 6 V10 H6" stroke="#000" stroke-width="2" fill="none"/></svg><div style="position:absolute;left:1862px;top:963px;width:53px;height:14px;box-sizing:border-box;background:#e1e1e1;border:1px solid #adadad"></div><div class="t" style="left:1862px;width:53px;top:962.6px;font-size:10.5px;text-align:center">Clear</div><div style="position:absolute;left:3px;top:977px;width:1913px;height:33px;box-sizing:border-box;background:#fff;border:1px solid #7a7f8a"></div><div style="position:absolute;left:1895px;top:978px;width:20px;height:31px;box-sizing:border-box;background:#f0f0f0"></div><svg style="position:absolute;left:1895px;top:978px" width="20" height="31"><path d="M5.5 10 L10 5.5 L14.5 10" fill="none" stroke="#606060" stroke-width="2"/><path d="M5.5 21 L10 25.5 L14.5 21" fill="none" stroke="#606060" stroke-width="2"/></svg><div style="position:absolute;left:4px;top:978px;width:1890px;height:31px;overflow:hidden"><div class="t" style="left:3px;top:3px;font-size:11.6px;font-family:'Liberation Mono',monospace">30</div><div class="t" style="left:3px;top:16px;font-size:11.6px;font-family:'Liberation Mono',monospace">observer&gt; show i-will-chose-who-should-move</div><div class="t" style="left:3px;top:29px;font-size:11.6px;font-family:'Liberation Mono',monospace">observer: false</div></div><div style="position:absolute;left:2px;top:1010px;width:60px;height:16px;box-sizing:border-box;background:#bbbbe5"></div><div class="t" style="left:2px;top:1011.0px;font-size:13px;color:#000;font-weight:400;font-family:'Liberation Sans',sans-serif;">observer&gt;</div><div style="position:absolute;left:62px;top:1010px;width:1836px;height:16px;box-sizing:border-box;background:#fff;border:1px solid #7a7f8a"></div><div style="position:absolute;left:1898px;top:1011px;width:17px;height:15px;box-sizing:border-box;background:#d6d6d6"></div><svg style="position:absolute;left:1898px;top:1011px" width="17" height="15"><polygon points="4,5 13,5 8.5,10" fill="#000"/></svg><div style="position:absolute;left:0px;top:1027px;width:1920px;height:3px;box-sizing:border-box;background:#f0f0f0"></div><div style="position:absolute;left:0px;top:1030px;width:60px;height:2px;box-sizing:border-box;background:#222"></div><div style="position:absolute;left:490px;top:1030px;width:894px;height:2px;box-sizing:border-box;background:#222"></div><div style="position:absolute;left:1437px;top:1030px;width:483px;height:2px;box-sizing:border-box;background:#222"></div><div style="position:absolute;left:1384px;top:1030px;width:53px;height:2px;box-sizing:border-box;background:#555"></div></body></html>
